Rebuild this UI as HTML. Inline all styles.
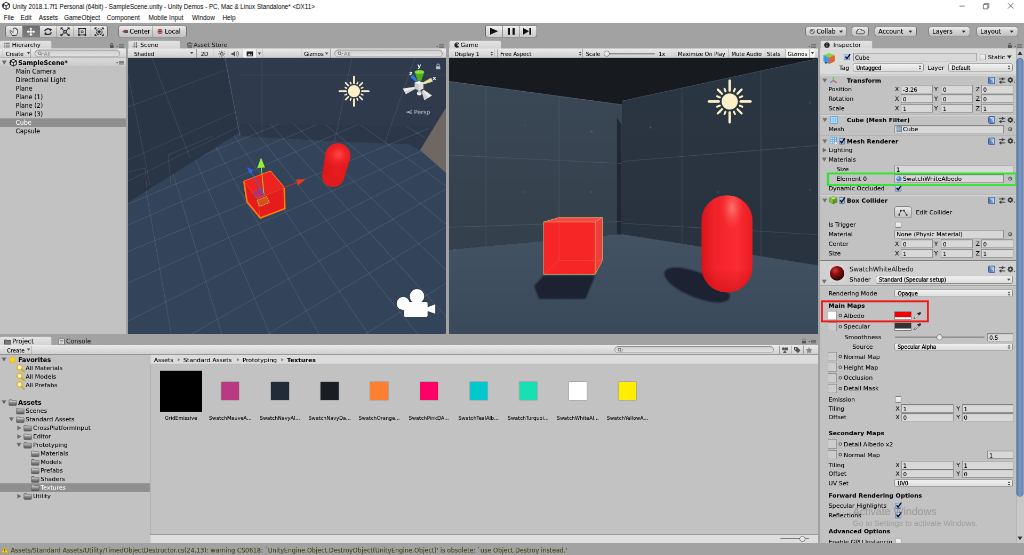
<!DOCTYPE html>
<html><head><meta charset="utf-8"><title>Unity</title><style>
html,body{margin:0;padding:0;background:#a2a2a2;overflow:hidden;width:1024px;height:555px}
#root{position:absolute;left:0;top:0;width:1920px;height:1041px;transform:scale(0.5333333);transform-origin:0 0;font:11.4px "DejaVu Sans","Liberation Sans",sans-serif;color:#000;overflow:hidden}
#root div,#root span,#root svg{position:absolute;box-sizing:border-box}
#root svg{overflow:visible}
.t{white-space:nowrap;transform:translateY(-50%);line-height:1.2}
.b{font-weight:bold}
#u .t{-webkit-text-stroke:0.13px currentColor}
#u .t.b{-webkit-text-stroke:0.06px currentColor}
.btn{border:1px solid #6b6b6b;border-radius:4px;background:linear-gradient(#ececec,#d2d2d2 50%,#c4c4c4)}
.tab{background:linear-gradient(#e4e4e4,#d3d3d3);border:1px solid #b4b4b4;border-bottom:none;border-radius:3px 3px 0 0}
.ptb{background:linear-gradient(#ebebeb,#cfcfcf);border-bottom:1px solid #8a8a8a}
.panel{background:#c2c2c2}
.fld{background:#d8d8d8;border:1px solid #8d8d8d;border-top-color:#7a7a7a;box-shadow:inset 0 1px 1px rgba(0,0,0,.12)}
.dd{background:linear-gradient(#f2f2f2,#dcdcdc);border:1px solid #8a8a8a;border-radius:3px}
.sep{background:#8e8e8e}
</style></head><body><div id="root">
<div style="left:0.00px;top:0.00px;width:1920.00px;height:43.00px;background:#fff"></div>
<svg style="left:2.500px;top:3px;width:16px;height:16px" viewBox="0 0 16 16"><path d="M8.500 1.200 L14.600 4.600 V11.400 L8.500 14.800 L2.400 11.400 V4.600 Z" fill="#fff" stroke="#1a1a1a" stroke-width="1.700" stroke-linejoin="round"/><path d="M8.500 8 V14.800 M8.500 8 L14.600 4.600 M8.500 8 L2.400 4.600" stroke="#1a1a1a" stroke-width="1.700" fill="none"/><path d="M0 8 L4.200 5.300 V10.700 Z" fill="#1a1a1a"/></svg>
<span class="t" style="left:23.60px;top:10.60px;font:11.65px 'Liberation Sans',sans-serif;color:#000;transform:translateY(-50%) scaleY(1.2)">Unity 2018.1.7f1 Personal (64bit) - SampleScene.unity - Unity Demos - PC, Mac &amp; Linux Standalone* &lt;DX11&gt;</span>
<svg style="left:1780px;top:0;width:140px;height:23px" viewBox="0 0 140 23"><path d="M19 11.5 H29" stroke="#222" stroke-width="1"/><path d="M64 8.5 H72 V16.5 H64 Z M66 8.5 V6.5 H74 V14.5 H72" stroke="#222" stroke-width="1" fill="none"/><path d="M110 6 L120 16 M120 6 L110 16" stroke="#222" stroke-width="1.1"/></svg>
<span class="t" style="left:7.00px;top:33.00px;font:12px 'Liberation Sans',sans-serif;color:#000;transform:translateY(-50%) scaleY(1.1)">File</span>
<span class="t" style="left:38.40px;top:33.00px;font:12px 'Liberation Sans',sans-serif;color:#000;transform:translateY(-50%) scaleY(1.1)">Edit</span>
<span class="t" style="left:72.70px;top:33.00px;font:12px 'Liberation Sans',sans-serif;color:#000;transform:translateY(-50%) scaleY(1.1)">Assets</span>
<span class="t" style="left:120.00px;top:33.00px;font:12px 'Liberation Sans',sans-serif;color:#000;transform:translateY(-50%) scaleY(1.1)">GameObject</span>
<span class="t" style="left:200.00px;top:33.00px;font:12px 'Liberation Sans',sans-serif;color:#000;transform:translateY(-50%) scaleY(1.1)">Component</span>
<span class="t" style="left:278.40px;top:33.00px;font:12px 'Liberation Sans',sans-serif;color:#000;transform:translateY(-50%) scaleY(1.1)">Mobile Input</span>
<span class="t" style="left:360.00px;top:33.00px;font:12px 'Liberation Sans',sans-serif;color:#000;transform:translateY(-50%) scaleY(1.1)">Window</span>
<span class="t" style="left:417.00px;top:33.00px;font:12px 'Liberation Sans',sans-serif;color:#000;transform:translateY(-50%) scaleY(1.1)">Help</span>
<div id="u" style="left:0;top:0;width:1920px;height:1041px;will-change:transform">
<div style="left:0.00px;top:43.00px;width:1920.00px;height:33.00px;background:#a2a2a2"></div>
<div class="btn" style="left:10.00px;top:48.00px;width:192.00px;height:22.00px;"></div>
<div style="left:42.00px;top:48.00px;width:1.00px;height:22.00px;background:#7a7a7a"></div>
<div style="left:42.00px;top:48.00px;width:32.00px;height:22.00px;background:linear-gradient(#6e6e6e,#7e7e7e);border-top:1px solid #555;border-bottom:1px solid #555"></div>
<div style="left:74.00px;top:48.00px;width:1.00px;height:22.00px;background:#7a7a7a"></div>
<div style="left:106.00px;top:48.00px;width:1.00px;height:22.00px;background:#7a7a7a"></div>
<div style="left:138.00px;top:48.00px;width:1.00px;height:22.00px;background:#7a7a7a"></div>
<div style="left:170.00px;top:48.00px;width:1.00px;height:22.00px;background:#7a7a7a"></div>
<svg style="left:16px;top:49.5px;width:20px;height:19px" viewBox="0 0 20 19"><g transform="translate(-3.2 -3.4) scale(1.32)"><path d="M6.5 9 C5 7.5 3.5 8.5 5 10.5 L8 15 H13.5 C15 13 15.5 10 15 7 C14.8 6 13.6 6 13.5 7 V5.5 C13.4 4.5 12.1 4.5 12 5.500 V4.8 C11.9 3.8 10.6 3.8 10.5 4.8 V5.6 C10.4 4.6 9.1 4.6 9 5.6 V11 Z" fill="#e4e4e4" stroke="#3a3a3a" stroke-width=".85"/></g></svg>
<svg style="left:48px;top:49.5px;width:20px;height:19px" viewBox="0 0 20 19"><path d="M10 1.5 L13 5 H11 V8.5 H14.5 V6.5 L18 9.5 L14.5 12.5 V10.5 H11 V14 H13 L10 17.5 L7 14 H9 V10.5 H5.5 V12.5 L2 9.5 L5.5 6.5 V8.5 H9 V5 H7 Z" fill="#fff"/></svg>
<svg style="left:80px;top:49.5px;width:20px;height:19px" viewBox="0 0 20 19"><path d="M4 8.5 A6 5 0 0 1 15 6.5 M16 10.5 A6 5 0 0 1 5 12.5" stroke="#222" stroke-width="2.2" fill="none"/><path d="M13 3 L17.5 5 L14 9 Z M7 16 L2.5 14 L6 10 Z" fill="#222"/></svg>
<svg style="left:112px;top:49.5px;width:20px;height:19px" viewBox="0 0 20 19"><rect x="7.700" y="7.200" width="4.600" height="4.600" fill="#ddd" stroke="#222" stroke-width="1.900"/><path d="M2 2 L6.5 6 M18 2 L13.5 6 M2 17 L6.5 13 M18 17 L13.5 13" stroke="#222" stroke-width="1.8"/><path d="M1.5 1.5 H6 L1.5 6 Z M18.5 1.5 H14 L18.500 6 Z M1.5 17.5 H6 L1.5 13 Z M18.5 17.5 H14 L18.5 13 Z" fill="#222"/></svg>
<svg style="left:144px;top:49.5px;width:20px;height:19px" viewBox="0 0 20 19"><rect x="4" y="3.5" width="12" height="12" fill="none" stroke="#222" stroke-width="1.6"/><circle cx="10" cy="9.5" r="2" fill="none" stroke="#222" stroke-width="1.2"/><path d="M2.5 2 h3 v3 h-3z M14.5 2 h3 v3 h-3z M2.5 14 h3 v3 h-3z M14.5 14 h3 v3 h-3z" fill="#222"/></svg>
<svg style="left:176px;top:49.5px;width:20px;height:19px" viewBox="0 0 20 19"><path d="M3 3 L17 16 M17 3 L3 16" stroke="#222" stroke-width="1.2" stroke-dasharray="2 1.5"/><circle cx="10" cy="9.5" r="5.5" fill="none" stroke="#222" stroke-width="1.4" stroke-dasharray="3 1.5"/><path d="M10 6 V13 M6.500 9.5 H13.5" stroke="#222" stroke-width="1.4"/><path d="M1.5 1.5 H6 L1.5 6 Z M18.5 1.5 H14 L18.500 6 Z M1.5 17.5 H6 L1.5 13 Z M18.5 17.5 H14 L18.5 13 Z" fill="#222"/></svg>
<div class="btn" style="left:222.00px;top:48.00px;width:128.00px;height:22.00px;"></div>
<div style="left:286.00px;top:48.00px;width:1.00px;height:22.00px;background:#7a7a7a"></div>
<svg style="left:229px;top:54px;width:12px;height:10px" viewBox="0 0 12 10"><path d="M0 5 L6 1 V9 Z" fill="#b33"/><path d="M6 2 H11 V8 H6" fill="#555"/></svg>
<span class="t" style="left:243.00px;top:60.00px;font-size:11.5px">Center</span>
<svg style="left:294px;top:53px;width:12px;height:12px" viewBox="0 0 12 12"><circle cx="6" cy="6" r="5" fill="#a44"/><path d="M1 6 H11 M6 1 V11" stroke="#633" stroke-width="1"/><ellipse cx="6" cy="6" rx="5" ry="2.3" fill="none" stroke="#ddd" stroke-width=".8"/></svg>
<span class="t" style="left:309.00px;top:60.00px;font-size:11.5px">Local</span>
<div class="btn" style="left:910.00px;top:47.00px;width:97.00px;height:23.00px;border-color:#5a5a5a;background:linear-gradient(#f6f6f6,#dcdcdc 50%,#cccccc)"></div>
<div style="left:942.00px;top:47.00px;width:1.00px;height:23.00px;background:#7a7a7a"></div>
<div style="left:974.00px;top:47.00px;width:1.00px;height:23.00px;background:#7a7a7a"></div>
<svg style="left:910px;top:47px;width:96px;height:23px" viewBox="0 0 96 23"><path d="M9 5 L24 11.5 L9 18 Z" fill="#111"/><path d="M42 5.500 h4 v12.5 h-4z M51 5.5 h4 v12.5 h-4z" fill="#111"/><path d="M71 5.5 L82 11.5 L71 18 Z M82.500 5.5 h3.5 v12.5 h-3.5z" fill="#111"/></svg>
<div class="btn" style="left:1510.00px;top:50.00px;width:78.00px;height:18.00px;"></div>
<svg style="left:1517px;top:53px;width:12px;height:12px" viewBox="0 0 12 12"><circle cx="6" cy="6" r="5" fill="#777"/><path d="M3 6 L5.300 8.5 L9.300 3.500" stroke="#e8e8e8" stroke-width="1.6" fill="none"/></svg>
<span class="t" style="left:1531.00px;top:60.00px;font-size:11.5px">Collab</span>
<svg style="left:1573px;top:57px;width:8px;height:5px" viewBox="0 0 8 5"><path d="M0.500 0.5 H7.5 L4 4.500 Z" fill="#222"/></svg>
<div class="btn" style="left:1597.00px;top:50.00px;width:32.00px;height:18.00px;"></div>
<svg style="left:1603px;top:53px;width:20px;height:12px" viewBox="0 0 20 12"><path d="M4.500 10.500 A3 3 0 0 1 4.500 4.800 A4.500 4.500 0 0 1 13 4 A3.300 3.300 0 0 1 15.500 10.500 Z" fill="none" stroke="#333" stroke-width="1.3"/></svg>
<div class="btn" style="left:1640.00px;top:50.00px;width:79.00px;height:18.00px;"></div>
<span class="t" style="left:1647.00px;top:60.00px;font-size:11.5px">Account</span>
<svg style="left:1703px;top:57px;width:8px;height:5px" viewBox="0 0 8 5"><path d="M0.500 0.5 H7.5 L4 4.500 Z" fill="#222"/></svg>
<div class="btn" style="left:1741.00px;top:50.00px;width:78.00px;height:18.00px;"></div>
<span class="t" style="left:1748.00px;top:60.00px;font-size:11.5px">Layers</span>
<svg style="left:1803px;top:57px;width:8px;height:5px" viewBox="0 0 8 5"><path d="M0.500 0.5 H7.5 L4 4.500 Z" fill="#222"/></svg>
<div class="btn" style="left:1831.00px;top:50.00px;width:78.00px;height:18.00px;"></div>
<span class="t" style="left:1838.00px;top:60.00px;font-size:11.5px">Layout</span>
<svg style="left:1893px;top:57px;width:8px;height:5px" viewBox="0 0 8 5"><path d="M0.500 0.5 H7.5 L4 4.500 Z" fill="#222"/></svg>
<div class="panel" style="left:0.00px;top:91.00px;width:236.00px;height:535.00px;"></div>
<div class="tab" style="left:-1.00px;top:76.00px;width:98.00px;height:16.00px;"></div>
<svg style="left:7px;top:80px;width:11px;height:9px" viewBox="0 0 11 9"><path d="M0 1 h2 M3.500 1 h7.500 M0 4.500 h2 M3.500 4.500 h7.500 M0 8 h2 M3.500 8 h7.500" stroke="#555" stroke-width="1.3"/></svg>
<span class="t" style="left:22.50px;top:84.90px;font-size:11.1px">Hierarchy</span>
<svg style="left:205px;top:80px;width:9px;height:11px" viewBox="0 0 9 11"><path d="M1 5 h7 v5 h-7z" fill="#555"/><path d="M2.500 5 V3.300 a2 2 0 0 1 4 0 V5" fill="none" stroke="#555" stroke-width="1.2"/></svg>
<svg style="left:218px;top:83px;width:14px;height:8px" viewBox="0 0 14 8"><path d="M0 3 h3.500 l-1.750 2.200z" fill="#444"/><path d="M5 1 h9 M5 3.500 h9 M5 6 h9" stroke="#666" stroke-width="1.5"/></svg>
<div class="ptb" style="left:0.00px;top:91.00px;width:236.00px;height:18.00px;"></div>
<div style="left:5.00px;top:92.00px;width:1.00px;height:16.00px;background:#9a9a9a"></div>
<span class="t" style="left:11.00px;top:101.50px;font-size:10px">Create</span>
<svg style="left:50px;top:97px;width:7px;height:5px" viewBox="0 0 7 5"><path d="M0.500 0.5 h6 l-3 4z" fill="#444"/></svg>
<div style="left:57.00px;top:92.00px;width:1.00px;height:16.00px;background:#9a9a9a"></div>
<div style="left:64.50px;top:93.00px;width:160.00px;height:14.00px;background:linear-gradient(#d0d0d0,#e2e2e2);border:1px solid #8a8a8a;border-radius:8px;box-shadow:inset 0 1px 1px rgba(0,0,0,.2)"></div>
<svg style="left:70.5px;top:96px;width:12px;height:9px" viewBox="0 0 12 9"><circle cx="3.500" cy="3.700" r="2.600" fill="none" stroke="#6a6a6a" stroke-width="1.1"/><path d="M5.300 5.700 L7.500 8.200" stroke="#6a6a6a" stroke-width="1.2"/><path d="M8 3.500 h3 l-1.500 2z" fill="#6a6a6a"/></svg>
<span class="t" style="left:82.00px;top:100.50px;color:#8c8c8c;font-size:10.5px">All</span>
<div style="left:0.00px;top:109.00px;width:236.00px;height:17.00px;background:linear-gradient(#d9d9d9,#cacaca);border-bottom:1px solid #9c9c9c"></div>
<svg style="left:3px;top:113px;width:10px;height:9px" viewBox="0 0 10 9"><path d="M0.500 0.500 h9 l-4.500 8z" fill="#6a6a6a"/></svg>
<svg style="left:16.500px;top:110px;width:15px;height:15px" viewBox="0 0 16 16"><path d="M8.500 1.200 L14.600 4.600 V11.400 L8.500 14.800 L2.400 11.400 V4.600 Z" fill="#e2e2e2" stroke="#1a1a1a" stroke-width="1.700" stroke-linejoin="round"/><path d="M8.500 8 V14.800 M8.500 8 L14.600 4.600 M8.500 8 L2.400 4.600" stroke="#1a1a1a" stroke-width="1.700" fill="none"/><path d="M0 8 L4.200 5.300 V10.700 Z" fill="#1a1a1a"/></svg>
<span class="t b" style="left:34.00px;top:118.50px;font-size:11.5px">SampleScene*</span>
<svg style="left:218px;top:114px;width:14px;height:8px" viewBox="0 0 14 8"><path d="M0 3 h3.500 l-1.750 2.200z" fill="#444"/><path d="M5 1 h9 M5 3.500 h9 M5 6 h9" stroke="#666" stroke-width="1.5"/></svg>
<span class="t" style="left:29.50px;top:135.40px;">Main Camera</span>
<span class="t" style="left:29.50px;top:151.40px;">Directional Light</span>
<span class="t" style="left:29.50px;top:167.40px;">Plane</span>
<span class="t" style="left:29.50px;top:183.40px;">Plane (1)</span>
<span class="t" style="left:29.50px;top:199.40px;">Plane (2)</span>
<span class="t" style="left:29.50px;top:215.40px;">Plane (3)</span>
<div style="left:0.00px;top:222.00px;width:236.00px;height:16.00px;background:#8f8f8f"></div>
<span class="t" style="left:29.50px;top:231.40px;color:#fff">Cube</span>
<span class="t" style="left:29.50px;top:247.40px;">Capsule</span>
<div class="panel" style="left:240.00px;top:91.00px;width:596.00px;height:535.00px;"></div>
<div class="tab" style="left:240.00px;top:76.00px;width:98.00px;height:16.00px;"></div>
<svg style="left:248px;top:79px;width:11px;height:11px" viewBox="0 0 11 11"><path d="M3.500 0 V11 M7.500 0 V11 M0 3.500 H11 M0 7.500 H11" stroke="#444" stroke-width="1.2"/></svg>
<span class="t" style="left:263.00px;top:84.90px;font-size:11.1px">Scene</span>
<svg style="left:350px;top:79px;width:11px;height:11px" viewBox="0 0 11 11"><path d="M1.500 3 h8.500 l-1 7.500 h-6.500z" fill="none" stroke="#555" stroke-width="1.3"/><path d="M3.500 3 a2 2.500 0 0 1 4 0" fill="none" stroke="#555" stroke-width="1.2"/><path d="M3 5 h5 v3.500 h-5z" fill="#666"/></svg>
<span class="t" style="left:363.00px;top:84.90px;font-size:11.1px;color:#222">Asset Store</span>
<svg style="left:818px;top:83px;width:14px;height:8px" viewBox="0 0 14 8"><path d="M0 3 h3.500 l-1.750 2.200z" fill="#444"/><path d="M5 1 h9 M5 3.500 h9 M5 6 h9" stroke="#666" stroke-width="1.5"/></svg>
<div class="ptb" style="left:240.00px;top:91.00px;width:596.00px;height:18.00px;"></div>
<span class="t" style="left:251.50px;top:101.50px;font-size:10px">Shaded</span>
<svg style="left:356px;top:97px;width:7px;height:5px" viewBox="0 0 7 5"><path d="M0.500 0.5 h6 l-3 4z" fill="#444"/></svg>
<div style="left:368.00px;top:92.00px;width:1.00px;height:16.00px;background:#9a9a9a"></div>
<div style="left:399.00px;top:92.00px;width:1.00px;height:16.00px;background:#9a9a9a"></div>
<div style="left:427.00px;top:92.00px;width:1.00px;height:16.00px;background:#9a9a9a"></div>
<div style="left:455.00px;top:92.00px;width:1.00px;height:16.00px;background:#9a9a9a"></div>
<div style="left:480.50px;top:92.00px;width:1.00px;height:16.00px;background:#9a9a9a"></div>
<div style="left:491.00px;top:92.00px;width:1.00px;height:16.00px;background:#9a9a9a"></div>
<span class="t" style="left:376.50px;top:101.50px;font-size:10px">2D</span>
<svg style="left:408.5px;top:93.5px;width:14px;height:14px" viewBox="0 0 14 14"><circle cx="7" cy="7" r="2.400" fill="none" stroke="#333" stroke-width="1.100"/><path d="M7 0.500 V3 M7 11 V13.500 M0.500 7 H3 M11 7 H13.500 M2.400 2.400 L4.200 4.200 M9.800 9.800 L11.600 11.600 M2.400 11.600 L4.200 9.800 M9.800 4.200 L11.600 2.400" stroke="#333" stroke-width="1"/></svg>
<svg style="left:433px;top:93.5px;width:16px;height:14px" viewBox="0 0 16 14"><path d="M1 5 h3 l4 -3.500 v11 l-4 -3.500 h-3z" fill="#555"/><path d="M10 4 a4 4 0 0 1 0 6 M12 2 a6.500 6.500 0 0 1 0 10" fill="none" stroke="#666" stroke-width="1.2"/></svg>
<div style="left:455.50px;top:91.00px;width:25.00px;height:17.00px;background:#f4f4f4"></div>
<svg style="left:461.5px;top:95.5px;width:13px;height:10px" viewBox="0 0 13 10"><rect x="0.500" y="0.500" width="12" height="9" fill="#222"/><path d="M2 8 l3 -4 l2.500 3 l1.500 -1.500 l2 2.500z" fill="#eee"/></svg>
<svg style="left:483px;top:97.5px;width:7px;height:5px" viewBox="0 0 7 5"><path d="M0.500 0.5 h6 l-3 4z" fill="#444"/></svg>
<div style="left:564.00px;top:92.00px;width:1.00px;height:16.00px;background:#9a9a9a"></div>
<span class="t" style="left:570.00px;top:101.50px;font-size:10px">Gizmos</span>
<svg style="left:608.5px;top:97.5px;width:7px;height:5px" viewBox="0 0 7 5"><path d="M0.500 0.5 h6 l-3 4z" fill="#444"/></svg>
<div style="left:618.50px;top:92.00px;width:1.00px;height:16.00px;background:#9a9a9a"></div>
<div style="left:627.00px;top:93.00px;width:203.00px;height:14.00px;background:linear-gradient(#d0d0d0,#e2e2e2);border:1px solid #8a8a8a;border-radius:8px;box-shadow:inset 0 1px 1px rgba(0,0,0,.2)"></div>
<svg style="left:633px;top:96px;width:12px;height:9px" viewBox="0 0 12 9"><circle cx="3.500" cy="3.700" r="2.600" fill="none" stroke="#6a6a6a" stroke-width="1.1"/><path d="M5.300 5.700 L7.500 8.200" stroke="#6a6a6a" stroke-width="1.2"/><path d="M8 3.500 h3 l-1.500 2z" fill="#6a6a6a"/></svg>
<span class="t" style="left:644.50px;top:100.50px;color:#8c8c8c;font-size:10.5px">All</span>
<svg style="left:240px;top:109px;width:596px;height:517px;overflow:hidden" viewBox="128 58.133 317.867 275.734" preserveAspectRatio="none"><defs><clipPath id="floorclip"><polygon points="128,202.300 240.400,131.800 240,124 430,126 420,150.100 448,174.700 448,334 128,334"/></clipPath><linearGradient id="capg" x1="0" y1="0" x2="1" y2="0"><stop offset="0" stop-color="#da161a"/><stop offset=".5" stop-color="#e81c20"/><stop offset="1" stop-color="#e01a1e"/></linearGradient><radialGradient id="capr" cx=".53" cy=".45" r=".55"><stop offset="0" stop-color="#ff4a4a"/><stop offset=".5" stop-color="#f22428"/><stop offset="1" stop-color="#e21a1e"/></radialGradient></defs><rect x="128" y="58.133" width="317.867" height="275.734" fill="#33445a"/><polygon points="225,58 448,58 448,110 420,150.100 409,144.200 340,141.500 241,136 240.400,131.800" fill="#2f3b4d"/><polygon points="240,124.500 432,126.500 420,150.100 409,144.200 340,141.500 241,136" fill="#2c384a"/><polygon points="128,58 225,58 240.400,131.800 128,202.300" fill="#293545"/><polygon points="448,104.600 420,150.100 448,174.700" fill="#6e6762"/><path d="M225 58 L240 136" stroke="#55606e" stroke-width=".7"/><path d="M128 107 L225 70" stroke="#8090a0" stroke-opacity=".28" stroke-width=".6"/><path d="M128 160 L235 112" stroke="#8090a0" stroke-opacity=".28" stroke-width=".6"/><path d="M128 181 L240 126" stroke="#8090a0" stroke-opacity=".28" stroke-width=".6"/><path d="M152 58 L190 158" stroke="#8090a0" stroke-opacity=".28" stroke-width=".6"/><path d="M128 75 L150 185" stroke="#8090a0" stroke-opacity=".28" stroke-width=".6"/><path d="M240 75 L448 75" stroke="#8090a0" stroke-opacity=".28" stroke-width=".6"/><path d="M352 58 L334.5 142" stroke="#8090a0" stroke-opacity=".28" stroke-width=".6"/><path d="M415 58 L385 142" stroke="#8090a0" stroke-opacity=".28" stroke-width=".6"/><path d="M262 58 L262 137" stroke="#8090a0" stroke-opacity=".28" stroke-width=".6"/><path d="M168 155 L213 136" stroke="#8090a0" stroke-opacity=".28" stroke-width=".6"/><path d="M168 155 L171 185" stroke="#8090a0" stroke-opacity=".28" stroke-width=".6"/><path d="M128 172 L145 168" stroke="#8090a0" stroke-opacity=".28" stroke-width=".6"/><path d="M145 168 L147 190" stroke="#8090a0" stroke-opacity=".28" stroke-width=".6"/><g clip-path="url(#floorclip)" stroke="#a8b0b4" stroke-opacity=".23" stroke-width=".6"><path d="M102 -60 L122.3 340"/><path d="M102 -60 L172.3 340"/><path d="M102 -60 L223.6 340"/><path d="M102 -60 L272.3 340"/><path d="M102 -60 L322.3 340"/><path d="M102 -60 L372.3 340"/><path d="M102 -60 L422.3 340"/><path d="M102 -60 L467.6 340"/><path d="M102 -60 L519.2 340"/><path d="M102 -60 L585.9 340"/><path d="M102 -60 L661.4 340"/><path d="M102 -60 L755.1 340"/><path d="M102 -60 L880.1 340"/><path d="M100 215.8 L460 64.6"/><path d="M100 237.2 L460 79.9"/><path d="M100 263.0 L460 115.7"/><path d="M100 295.6 L460 133.6"/><path d="M100 335.2 L460 153.0"/><path d="M100 386.2 L460 181.0"/><path d="M100 434.8 L460 218.8"/><path d="M100 501.2 L460 274.4"/><path d="M100 561.2 L460 323.6"/><path d="M100 197.5 L460 49.9"/></g><circle cx="354" cy="91.2" r="6" fill="#fdf0c8"/><path d="M362.00 91.20 L368.60 91.20" stroke="#fdf0c8" stroke-width="1.84" stroke-linecap="round"/><path d="M361.39 94.26 L362.87 94.87" stroke="#fdf0c8" stroke-width="1.44" stroke-linecap="round"/><path d="M359.66 96.86 L362.34 99.54" stroke="#fdf0c8" stroke-width="1.60" stroke-linecap="round"/><path d="M357.06 98.59 L357.67 100.07" stroke="#fdf0c8" stroke-width="1.44" stroke-linecap="round"/><path d="M354.00 99.20 L354.00 105.80" stroke="#fdf0c8" stroke-width="1.84" stroke-linecap="round"/><path d="M350.94 98.59 L350.33 100.07" stroke="#fdf0c8" stroke-width="1.44" stroke-linecap="round"/><path d="M348.34 96.86 L345.66 99.54" stroke="#fdf0c8" stroke-width="1.60" stroke-linecap="round"/><path d="M346.61 94.26 L345.13 94.87" stroke="#fdf0c8" stroke-width="1.44" stroke-linecap="round"/><path d="M346.00 91.20 L339.40 91.20" stroke="#fdf0c8" stroke-width="1.84" stroke-linecap="round"/><path d="M346.61 88.14 L345.13 87.53" stroke="#fdf0c8" stroke-width="1.44" stroke-linecap="round"/><path d="M348.34 85.54 L345.66 82.86" stroke="#fdf0c8" stroke-width="1.60" stroke-linecap="round"/><path d="M350.94 83.81 L350.33 82.33" stroke="#fdf0c8" stroke-width="1.44" stroke-linecap="round"/><path d="M354.00 83.20 L354.00 76.60" stroke="#fdf0c8" stroke-width="1.84" stroke-linecap="round"/><path d="M357.06 83.81 L357.67 82.33" stroke="#fdf0c8" stroke-width="1.44" stroke-linecap="round"/><path d="M359.66 85.54 L362.34 82.86" stroke="#fdf0c8" stroke-width="1.60" stroke-linecap="round"/><path d="M361.39 88.14 L362.87 87.53" stroke="#fdf0c8" stroke-width="1.44" stroke-linecap="round"/><g><circle cx="333.2" cy="176" r="11.1" fill="#e11a1e"/><polygon points="350.18,158.73 344.02,178.48 322.38,173.52 325.42,153.07" fill="url(#capg)"/><circle cx="337.8" cy="155.9" r="12.7" fill="url(#capr)"/></g><polygon points="270.400,171.400 243.900,181.500 247,201.700 260.300,218 284.900,208.600 284.200,187.800" fill="#e61c1c" stroke="#ff7a10" stroke-width="1.600" stroke-linejoin="round"/><polygon points="270.400,171.400 243.900,181.500 257.500,198.500 284.200,187.800" fill="#ef2222"/><path d="M243.900 181.500 L257.500 198.500 L284.200 187.800 M257.500 198.500 L260.300 218" stroke="#e8843a" stroke-opacity=".6" stroke-width=".5" fill="none"/><path d="M264 195 L296 183" stroke="#d03020" stroke-width=".8"/><polygon points="296,179.500 305.500,179.300 298,185.500" fill="#e83a1c"/><path d="M264 195 L261.200 166" stroke="#90e040" stroke-width=".8"/><polygon points="257.300,168 261,157.500 265,167.600" fill="#90f038"/><path d="M264 195 L250.500 171" stroke="#3a6ae0" stroke-width=".8"/><polygon points="247,167 253.500,170 249.500,174" fill="#2a62e6"/><polygon points="253.500,191.500 262,188.500 264,195 255.500,198" fill="#8040a0" fill-opacity=".55" stroke="#7060d0" stroke-width=".4"/><polygon points="257,200.500 266.500,196.500 269.500,202.500 260,206.500" fill="#c08020" fill-opacity=".55" stroke="#c8d040" stroke-width=".5"/><g><polygon points="410.200,76.800 413.300,74.900 417.700,80.800 415.900,82" fill="#2a7ae8"/><polygon points="414.600,72 424.300,72 421.300,80.800 417.700,80.800" fill="#4fae1a"/><ellipse cx="419.450" cy="72" rx="4.850" ry="1.900" fill="#86e038"/><polygon points="423,82.200 423.800,84.400 432.900,81.600 431.200,77.700" fill="#e6df98"/><polygon points="403,88.500 405.800,94.200 415.200,89 414.600,86.900" fill="#d4d4d4"/><polygon points="403,88.500 404.400,91.400 415,88 414.600,86.900" fill="#ececec"/><polygon points="424.300,100.400 431.900,95.500 423.800,89.800 421.500,91.300" fill="#cfcfcf"/><polygon points="428.100,98 431.900,95.500 423.800,89.800 422.600,90.500" fill="#e8e8e8"/><ellipse cx="419.300" cy="93.400" rx="2.300" ry="1.900" fill="#f0f0f0"/><rect x="418" y="89.500" width="2.600" height="3.500" fill="#c4c4c4"/><polygon points="414.600,82.600 419,81 423.400,82.600 423.400,88.800 419,90.400 414.600,88.800" fill="#cacaca"/><polygon points="414.600,82.600 419,81 423.400,82.600 419,84.200" fill="#f2f2f2"/><polygon points="419,84.200 423.400,82.600 423.400,88.800 419,90.400" fill="#dedede"/><text x="417.300" y="67.800" font-size="5.800" font-weight="bold" fill="#fff" font-family="DejaVu Sans,sans-serif">y</text><text x="432.600" y="80.200" font-size="5.800" font-weight="bold" fill="#fff" font-family="DejaVu Sans,sans-serif">x</text><text x="409.200" y="75.200" font-size="5.800" font-weight="bold" fill="#fff" font-family="DejaVu Sans,sans-serif">z</text></g><path d="M411.800 110.500 L406.800 112.100 L411.800 113.700 M406.800 112.100 H411.800" stroke="#b8bec6" stroke-width=".6" fill="none"/><text x="414" y="114.100" font-size="5.900" fill="#c4c9d0" font-family="DejaVu Sans,sans-serif">Persp</text><rect x="436" y="66.300" width="4.200" height="3" fill="#b8bcc6"/><path d="M436.900 66.300 v-1.100 a1.200 1.200 0 0 1 2.400 0 v1.100" stroke="#b8bcc6" stroke-width=".7" fill="none"/><g fill="#1c2838" stroke="#1c2838" stroke-width="1.400" stroke-linejoin="round" opacity=".55"><circle cx="403.200" cy="303.500" r="6.500"/><circle cx="417" cy="296.300" r="7.200"/><rect x="404" y="301.900" width="23.600" height="15" rx="1.600"/><polygon points="427,307.400 435.300,304.300 435.300,313.700 427,311"/></g><g fill="#fdfdfd"><circle cx="403.200" cy="303.500" r="6.500"/><circle cx="417" cy="296.300" r="7.200"/><rect x="404" y="301.900" width="23.600" height="15" rx="1.600"/><polygon points="427,307.400 435.300,304.300 435.300,313.700 427,311"/></g></svg>
<div class="panel" style="left:842.00px;top:91.00px;width:692.00px;height:535.00px;"></div>
<div class="tab" style="left:842.00px;top:76.00px;width:98.00px;height:16.00px;"></div>
<svg style="left:851px;top:79px;width:11px;height:11px" viewBox="0 0 11 11"><path d="M10 2.500 A5 5 0 1 0 10 8.500 L5.500 5.500 Z" fill="#222"/><circle cx="6" cy="3" r="1" fill="#ddd"/></svg>
<span class="t" style="left:863.50px;top:84.90px;font-size:11.1px">Game</span>
<svg style="left:1516px;top:83px;width:14px;height:8px" viewBox="0 0 14 8"><path d="M0 3 h3.500 l-1.750 2.200z" fill="#444"/><path d="M5 1 h9 M5 3.500 h9 M5 6 h9" stroke="#666" stroke-width="1.5"/></svg>
<div class="ptb" style="left:842.00px;top:91.00px;width:692.00px;height:18.00px;"></div>
<span class="t" style="left:852.50px;top:101.50px;font-size:10px">Display 1</span>
<span class="t" style="left:938.00px;top:101.50px;font-size:10px">Free Aspect</span>
<span class="t" style="left:1098.50px;top:101.50px;font-size:10px">Scale</span>
<span class="t" style="left:1235.00px;top:101.50px;font-size:10px">1x</span>
<span class="t" style="left:1271.00px;top:101.50px;font-size:10px">Maximize On Play</span>
<span class="t" style="left:1371.40px;top:101.50px;font-size:10px">Mute Audio</span>
<span class="t" style="left:1438.00px;top:101.50px;font-size:10px">Stats</span>
<div style="left:1472.00px;top:91.00px;width:56.00px;height:17.00px;background:#f4f4f4"></div>
<span class="t" style="left:1476.80px;top:101.50px;font-size:10px">Gizmos</span>
<div style="left:847.00px;top:92.00px;width:1.00px;height:16.00px;background:#9a9a9a"></div>
<div style="left:926.00px;top:92.00px;width:1.00px;height:16.00px;background:#9a9a9a"></div>
<div style="left:932.00px;top:92.00px;width:1.00px;height:16.00px;background:#9a9a9a"></div>
<div style="left:1092.00px;top:92.00px;width:1.00px;height:16.00px;background:#9a9a9a"></div>
<div style="left:1266.60px;top:92.00px;width:1.00px;height:16.00px;background:#9a9a9a"></div>
<div style="left:1366.00px;top:92.00px;width:1.00px;height:16.00px;background:#9a9a9a"></div>
<div style="left:1433.60px;top:92.00px;width:1.00px;height:16.00px;background:#9a9a9a"></div>
<div style="left:1471.50px;top:92.00px;width:1.00px;height:16.00px;background:#9a9a9a"></div>
<div style="left:1516.50px;top:92.00px;width:1.00px;height:16.00px;background:#9a9a9a"></div>
<svg style="left:1519.5px;top:97px;width:7px;height:5px" viewBox="0 0 7 5"><path d="M0.500 0.5 h6 l-3 4z" fill="#444"/></svg>
<svg style="left:919px;top:96px;width:6px;height:9px" viewBox="0 0 6 9"><path d="M0.500 3.500 L3 0.500 L5.500 3.500z M0.500 5.500 L3 8.500 L5.500 5.500z" fill="#444"/></svg>
<svg style="left:1084.5px;top:96px;width:6px;height:9px" viewBox="0 0 6 9"><path d="M0.500 3.500 L3 0.500 L5.500 3.500z M0.500 5.500 L3 8.500 L5.500 5.500z" fill="#444"/></svg>
<div style="left:1137.00px;top:99.50px;width:91.00px;height:2.00px;background:#7e7e7e;border-radius:1px"></div>
<div style="left:1132.00px;top:95.00px;width:10.50px;height:10.50px;background:#e8e8e8;border:1px solid #555;border-radius:5.5px"></div>
<svg style="left:842px;top:109px;width:692px;height:517px;overflow:hidden" viewBox="449.067 58.133 369.067 275.734" preserveAspectRatio="none"><defs><linearGradient id="lw" x1="0" y1="0" x2="0" y2="1"><stop offset="0" stop-color="#3b4855"/><stop offset="1" stop-color="#34404c"/></linearGradient><linearGradient id="rw" x1="0" y1="0" x2="0" y2="1"><stop offset="0" stop-color="#2b3643"/><stop offset="1" stop-color="#29333f"/></linearGradient><linearGradient id="fl" x1="0" y1="0" x2="0" y2="1"><stop offset="0" stop-color="#435364"/><stop offset="1" stop-color="#3b4a5b"/></linearGradient><linearGradient id="gcap" x1="0" y1="0" x2="1" y2="0"><stop offset="0" stop-color="#d8141a"/><stop offset=".25" stop-color="#f0242a"/><stop offset=".7" stop-color="#fb2c32"/><stop offset="1" stop-color="#e81c22"/></linearGradient><radialGradient id="gcaph" cx=".6" cy=".13" r=".22"><stop offset="0" stop-color="#ff8a80" stop-opacity=".8"/><stop offset="1" stop-color="#ff5050" stop-opacity="0"/></radialGradient><linearGradient id="gcapb" x1="0" y1="0" x2="0" y2="1"><stop offset=".75" stop-color="#a00" stop-opacity="0"/><stop offset="1" stop-color="#a00" stop-opacity=".35"/></linearGradient><filter id="blur1" x="-20%" y="-20%" width="140%" height="140%"><feGaussianBlur stdDeviation="0.8"/></filter></defs><rect x="449.067" y="58.133" width="369.067" height="275.734" fill="#171a1f"/><polygon points="449,249.500 622,234 819,265.400 819,334 449,334" fill="url(#fl)"/><polygon points="449,81.300 622,104.700 622,234 449,249.500" fill="url(#lw)"/><polygon points="622,101 819,58.300 819,265.400 622,234" fill="url(#rw)"/><polygon points="617,117.500 621.500,125 621.500,234.800 617,233.800" fill="#1d2532" fill-opacity=".9"/><path d="M486 86.3 L486 246.2" stroke="#6a7886" stroke-opacity=".4" stroke-width=".6"/><path d="M559 96.2 L559 239.6" stroke="#6a7886" stroke-opacity=".4" stroke-width=".6"/><path d="M449 155 L622 163.5" stroke="#6a7886" stroke-opacity=".4" stroke-width=".6"/><path d="M449 227.3 L622 221.5" stroke="#6a7886" stroke-opacity=".4" stroke-width=".6"/><path d="M682 88 L682 243.6" stroke="#6a7886" stroke-opacity=".4" stroke-width=".6"/><path d="M761 70.9 L761 256.2" stroke="#6a7886" stroke-opacity=".4" stroke-width=".6"/><path d="M622.7 161.3 L819 145.3" stroke="#6a7886" stroke-opacity=".4" stroke-width=".6"/><path d="M622.7 223.3 L819 234.7" stroke="#6a7886" stroke-opacity=".4" stroke-width=".6"/><path d="M449 81.300 L622 104.700" stroke="#5a6a7a" stroke-width=".5"/><path d="M622 101 L819 58.300" stroke="#4a5a6a" stroke-width=".5"/><path d="M523.5 125 H526.5 M525 123.5 V126.5" stroke="#6a7886" stroke-opacity=".5" stroke-width=".5"/><path d="M590.0 131.5 H593.0 M591.5 130.0 V133.0" stroke="#6a7886" stroke-opacity=".5" stroke-width=".5"/><path d="M523.5 192 H526.5 M525 190.5 V193.5" stroke="#6a7886" stroke-opacity=".5" stroke-width=".5"/><path d="M590.0 192 H593.0 M591.5 190.5 V193.5" stroke="#6a7886" stroke-opacity=".5" stroke-width=".5"/><path d="M649.0 127.5 H652.0 M650.5 126.0 V129.0" stroke="#6a7886" stroke-opacity=".5" stroke-width=".5"/><path d="M808.5 103 H811.5 M810 101.5 V104.5" stroke="#6a7886" stroke-opacity=".5" stroke-width=".5"/><path d="M716.5 192 H719.5 M718 190.5 V193.5" stroke="#6a7886" stroke-opacity=".5" stroke-width=".5"/><path d="M808.5 190 H811.5 M810 188.5 V191.5" stroke="#6a7886" stroke-opacity=".5" stroke-width=".5"/><path d="M453.5 250 H456.5 M455 248.5 V251.5" stroke="#6a7886" stroke-opacity=".5" stroke-width=".5"/><circle cx="729.7" cy="101.5" r="8.1" fill="#fdf0c8"/><path d="M740.70 101.50 L750.50 101.50" stroke="#fdf0c8" stroke-width="2.53" stroke-linecap="round"/><path d="M739.86 105.71 L742.26 106.70" stroke="#fdf0c8" stroke-width="1.98" stroke-linecap="round"/><path d="M737.48 109.28 L741.58 113.38" stroke="#fdf0c8" stroke-width="2.20" stroke-linecap="round"/><path d="M733.91 111.66 L734.90 114.06" stroke="#fdf0c8" stroke-width="1.98" stroke-linecap="round"/><path d="M729.70 112.50 L729.70 122.30" stroke="#fdf0c8" stroke-width="2.53" stroke-linecap="round"/><path d="M725.49 111.66 L724.50 114.06" stroke="#fdf0c8" stroke-width="1.98" stroke-linecap="round"/><path d="M721.92 109.28 L717.82 113.38" stroke="#fdf0c8" stroke-width="2.20" stroke-linecap="round"/><path d="M719.54 105.71 L717.14 106.70" stroke="#fdf0c8" stroke-width="1.98" stroke-linecap="round"/><path d="M718.70 101.50 L708.90 101.50" stroke="#fdf0c8" stroke-width="2.53" stroke-linecap="round"/><path d="M719.54 97.29 L717.14 96.30" stroke="#fdf0c8" stroke-width="1.98" stroke-linecap="round"/><path d="M721.92 93.72 L717.82 89.62" stroke="#fdf0c8" stroke-width="2.20" stroke-linecap="round"/><path d="M725.49 91.34 L724.50 88.94" stroke="#fdf0c8" stroke-width="1.98" stroke-linecap="round"/><path d="M729.70 90.50 L729.70 80.70" stroke="#fdf0c8" stroke-width="2.53" stroke-linecap="round"/><path d="M733.91 91.34 L734.90 88.94" stroke="#fdf0c8" stroke-width="1.98" stroke-linecap="round"/><path d="M737.48 93.72 L741.58 89.62" stroke="#fdf0c8" stroke-width="2.20" stroke-linecap="round"/><path d="M739.86 97.29 L742.26 96.30" stroke="#fdf0c8" stroke-width="1.98" stroke-linecap="round"/><polygon points="534,286 543.500,275.500 595,275.500 593,281 585.500,299 539,299" fill="#1b2331" filter="url(#blur1)"/><polygon points="543.500,222 559,217.500 602.500,217.500 595.200,222" fill="#f84848"/><polygon points="595.200,222 602.500,217.500 602.500,260.400 595.200,274.300" fill="#f03c3c"/><rect x="543.500" y="222" width="51.700" height="52.300" fill="#f62626"/><path d="M543.500 222 L559 217.500 H602.500 V260.400 L595.200 274.300 H543.500 Z M543.500 222 H595.200 V274.300 M595.200 222 L602.500 217.500" fill="none" stroke="#d8c468" stroke-width=".5"/><path d="M559 217.500 V260.400 L543.500 274.300 M559 260.400 H602.500" fill="none" stroke="#f06a50" stroke-opacity=".7" stroke-width=".4"/><g transform="rotate(22 697 285)"><ellipse cx="697" cy="285" rx="35" ry="12.500" fill="#1a2230" filter="url(#blur1)"/></g><rect x="701.500" y="195.300" width="51" height="97.200" rx="25.500" ry="25.500" fill="url(#gcap)"/><rect x="701.500" y="195.300" width="51" height="97.200" rx="25.500" ry="25.500" fill="url(#gcapb)"/><rect x="701.500" y="195.300" width="51" height="97.200" rx="25.500" ry="25.500" fill="url(#gcaph)"/></svg>
<div class="panel" style="left:1538.00px;top:91.00px;width:382.00px;height:927.12px;"></div>
<div class="tab" style="left:1538.00px;top:76.00px;width:98.00px;height:16.00px;"></div>
<svg style="left:1545px;top:79px;width:11px;height:11px" viewBox="0 0 11 11"><circle cx="5.500" cy="5.500" r="5.200" fill="#222"/><path d="M5.500 4.800 v3.800" stroke="#e0e0e0" stroke-width="1.500"/><circle cx="5.500" cy="2.900" r=".9" fill="#e0e0e0"/></svg>
<span class="t" style="left:1562.50px;top:84.90px;font-size:11.1px">Inspector</span>
<svg style="left:1889px;top:80px;width:9px;height:11px" viewBox="0 0 9 11"><path d="M1 5 h7 v5 h-7z" fill="#555"/><path d="M2.500 5 V3.300 a2 2 0 0 1 4 0 V5" fill="none" stroke="#555" stroke-width="1.2"/></svg>
<svg style="left:1902px;top:83px;width:14px;height:8px" viewBox="0 0 14 8"><path d="M0 3 h3.500 l-1.750 2.200z" fill="#444"/><path d="M5 1 h9 M5 3.500 h9 M5 6 h9" stroke="#666" stroke-width="1.5"/></svg>
<div style="left:1538.00px;top:91.00px;width:367.00px;height:49.62px;background:#dbdbdb;border-top:1px solid #f0f0f0"></div>
<svg style="left:1543.125px;top:99.375px;width:23px;height:22px" viewBox="0 0 23 22"><path d="M11.500 0.500 L22 4.500 L11.500 9 L1 4.500z" fill="#8ccf4a"/><path d="M1 4.500 L11.500 9 V21 L1 16z" fill="#3c9be0"/><path d="M22 4.500 L11.500 9 V21 L22 16z" fill="#e8622a"/><path d="M3 18 h5 l-2.500 3z" fill="#222"/></svg>
<div style="left:1582.25px;top:101.38px;width:11.50px;height:11.50px;background:linear-gradient(#c4d6ee,#86a8dc);border:1px solid #5a78a8;border-radius:2px"></div>
<svg style="left:1582.75px;top:99.875px;width:13px;height:12px" viewBox="0 0 13 12"><path d="M2.200 6.200 L5 9.800 L11 1.500" stroke="#0a0a14" stroke-width="2.300" fill="none"/></svg>
<div class="fld" style="left:1599.75px;top:98.88px;width:231.19px;height:16.00px;"></div>
<span class="t" style="left:1603.25px;top:107.88px;font-size:10.5px">Cube</span>
<div style="left:1836.88px;top:101.38px;width:11.50px;height:11.50px;background:linear-gradient(#f4f4f4,#dedede);border:1px solid #7a7a7a;border-radius:2px"></div>
<span class="t" style="left:1852.50px;top:107.88px;font-size:11.2px;">Static</span>
<svg style="left:1888.125px;top:103.875px;width:9px;height:6px" viewBox="0 0 9 6"><path d="M0 0 h9 l-4.500 6z" fill="#333"/></svg>
<span class="t" style="left:1573.50px;top:127.56px;font-size:11.2px;">Tag</span>
<div class="dd" style="left:1599.38px;top:119.31px;width:132.38px;height:14.50px;"></div>
<span class="t" style="left:1605.38px;top:127.56px;font-size:9.6px;-webkit-text-stroke:0.4px #000">Untagged</span>
<svg style="left:1721.75px;top:122.3125px;width:6px;height:9px" viewBox="0 0 6 9"><path d="M0.500 3.500 L3 0.500 L5.500 3.500z M0.500 5.500 L3 8.500 L5.500 5.500z" fill="#444"/></svg>
<span class="t" style="left:1739.25px;top:127.56px;font-size:11.2px;">Layer</span>
<div class="dd" style="left:1778.25px;top:119.31px;width:120.75px;height:14.50px;"></div>
<span class="t" style="left:1784.25px;top:127.56px;font-size:9.6px;-webkit-text-stroke:0.4px #000">Default</span>
<svg style="left:1889.0px;top:122.3125px;width:6px;height:9px" viewBox="0 0 6 9"><path d="M0.500 3.500 L3 0.500 L5.500 3.500z M0.500 5.500 L3 8.500 L5.500 5.500z" fill="#444"/></svg>
<div style="left:1538.00px;top:140.12px;width:367.00px;height:1.00px;background:#8a8a8a"></div>
<div style="left:1538.00px;top:141.12px;width:367.00px;height:1.00px;background:#d6d6d6"></div>
<svg style="left:1542.375px;top:146.75px;width:9px;height:8px" viewBox="0 0 9 8"><path d="M0 0.500 h9 l-4.500 7.500z" fill="#6e6e6e"/></svg>
<svg style="left:1555.3125px;top:143.4375px;width:15px;height:14px" viewBox="0 0 15 14"><path d="M7.500 8 V1" stroke="#5ad020" stroke-width="1.800"/><path d="M7.500 8 L1.500 12" stroke="#3a80e8" stroke-width="1.800"/><path d="M7.500 8 L13.500 12" stroke="#e83a30" stroke-width="1.800"/></svg>
<span class="t b" style="left:1587.75px;top:151.75px;font-size:11.3px;">Transform</span>
<svg style="left:1852.5px;top:143.75px;width:13px;height:14px" viewBox="0 0 13 14"><rect x="0.500" y="0.500" width="12" height="13" rx="2" fill="#5a84c0" stroke="#3a5a90" stroke-width="1"/><path d="M3 2.500 h5 a2 2 0 0 1 2 2 v7" fill="none" stroke="#dfe8f4" stroke-width="1.600"/><path d="M5.300 6 a1.500 1.500 0 1 1 1.800 1.500 v1.200 M7.100 10 v1.200" stroke="#fff" stroke-width="1.100" fill="none"/></svg>
<svg style="left:1873.125px;top:144.75px;width:12px;height:12px" viewBox="0 0 12 12"><path d="M0 3 h12 M0 9 h12" stroke="#333" stroke-width="1.600"/><path d="M7 0.500 v5 M3.500 6.500 v5" stroke="#333" stroke-width="2.400"/></svg>
<svg style="left:1889.0625px;top:144.25px;width:15px;height:13px" viewBox="0 0 15 13"><circle cx="5.500" cy="6" r="3.300" fill="none" stroke="#333" stroke-width="2.400"/><path d="M5.500 0.500 v2 M5.500 9.500 v2 M0 6 h2 M9 6 h2 M1.600 2.100 l1.400 1.400 M8 8.500 l1.400 1.400 M1.600 9.900 l1.400 -1.400 M8 3.500 l1.400 -1.400" stroke="#333" stroke-width="1.500"/><path d="M11.500 9 h3 l-1.500 2.500z" fill="#333"/></svg>
<span class="t" style="left:1553.44px;top:168.06px;font-size:11.2px;">Position</span>
<span class="t" style="left:1678.12px;top:168.06px;font-size:11px">X</span>
<div class="fld" style="left:1689.38px;top:159.31px;width:59.44px;height:15.50px;"></div>
<span class="t" style="left:1692.88px;top:168.06px;font-size:10.5px">-3.26</span>
<span class="t" style="left:1751.81px;top:168.06px;font-size:11px">Y</span>
<div class="fld" style="left:1764.38px;top:159.31px;width:60.00px;height:15.50px;"></div>
<span class="t" style="left:1767.88px;top:168.06px;font-size:10.5px">0</span>
<span class="t" style="left:1829.44px;top:168.06px;font-size:11px">Z</span>
<div class="fld" style="left:1840.12px;top:159.31px;width:60.00px;height:15.50px;"></div>
<span class="t" style="left:1843.62px;top:168.06px;font-size:10.5px">0</span>
<span class="t" style="left:1553.44px;top:186.06px;font-size:11.2px;">Rotation</span>
<span class="t" style="left:1678.12px;top:186.06px;font-size:11px">X</span>
<div class="fld" style="left:1689.38px;top:177.31px;width:59.44px;height:15.50px;"></div>
<span class="t" style="left:1692.88px;top:186.06px;font-size:10.5px">0</span>
<span class="t" style="left:1751.81px;top:186.06px;font-size:11px">Y</span>
<div class="fld" style="left:1764.38px;top:177.31px;width:60.00px;height:15.50px;"></div>
<span class="t" style="left:1767.88px;top:186.06px;font-size:10.5px">0</span>
<span class="t" style="left:1829.44px;top:186.06px;font-size:11px">Z</span>
<div class="fld" style="left:1840.12px;top:177.31px;width:60.00px;height:15.50px;"></div>
<span class="t" style="left:1843.62px;top:186.06px;font-size:10.5px">0</span>
<span class="t" style="left:1553.44px;top:204.06px;font-size:11.2px;">Scale</span>
<span class="t" style="left:1678.12px;top:204.06px;font-size:11px">X</span>
<div class="fld" style="left:1689.38px;top:195.31px;width:59.44px;height:15.50px;"></div>
<span class="t" style="left:1692.88px;top:204.06px;font-size:10.5px">1</span>
<span class="t" style="left:1751.81px;top:204.06px;font-size:11px">Y</span>
<div class="fld" style="left:1764.38px;top:195.31px;width:60.00px;height:15.50px;"></div>
<span class="t" style="left:1767.88px;top:204.06px;font-size:10.5px">1</span>
<span class="t" style="left:1829.44px;top:204.06px;font-size:11px">Z</span>
<div class="fld" style="left:1840.12px;top:195.31px;width:60.00px;height:15.50px;"></div>
<span class="t" style="left:1843.62px;top:204.06px;font-size:10.5px">1</span>
<div style="left:1538.00px;top:214.56px;width:367.00px;height:1.00px;background:#8a8a8a"></div>
<div style="left:1538.00px;top:215.56px;width:367.00px;height:1.00px;background:#d6d6d6"></div>
<svg style="left:1542.375px;top:221.375px;width:9px;height:8px" viewBox="0 0 9 8"><path d="M0 0.500 h9 l-4.500 7.500z" fill="#6e6e6e"/></svg>
<svg style="left:1557.1875px;top:218.0625px;width:14px;height:14px" viewBox="0 0 14 14"><rect x="0.500" y="0.500" width="13" height="13" fill="#cfe8fa" stroke="#5aa8e0"/><path d="M5 0.500 v13 M9 0.500 v13 M0.500 5 h13 M0.500 9 h13" stroke="#5aa8e0" stroke-width="1"/></svg>
<span class="t b" style="left:1587.75px;top:226.38px;font-size:11.3px;">Cube (Mesh Filter)</span>
<svg style="left:1852.5px;top:218.375px;width:13px;height:14px" viewBox="0 0 13 14"><rect x="0.500" y="0.500" width="12" height="13" rx="2" fill="#5a84c0" stroke="#3a5a90" stroke-width="1"/><path d="M3 2.500 h5 a2 2 0 0 1 2 2 v7" fill="none" stroke="#dfe8f4" stroke-width="1.600"/><path d="M5.300 6 a1.500 1.500 0 1 1 1.800 1.500 v1.200 M7.100 10 v1.200" stroke="#fff" stroke-width="1.100" fill="none"/></svg>
<svg style="left:1873.125px;top:219.375px;width:12px;height:12px" viewBox="0 0 12 12"><path d="M0 3 h12 M0 9 h12" stroke="#333" stroke-width="1.600"/><path d="M7 0.500 v5 M3.500 6.500 v5" stroke="#333" stroke-width="2.400"/></svg>
<svg style="left:1889.0625px;top:218.875px;width:15px;height:13px" viewBox="0 0 15 13"><circle cx="5.500" cy="6" r="3.300" fill="none" stroke="#333" stroke-width="2.400"/><path d="M5.500 0.500 v2 M5.500 9.500 v2 M0 6 h2 M9 6 h2 M1.600 2.100 l1.400 1.400 M8 8.500 l1.400 1.400 M1.600 9.900 l1.400 -1.400 M8 3.500 l1.400 -1.400" stroke="#333" stroke-width="1.500"/><path d="M11.500 9 h3 l-1.500 2.500z" fill="#333"/></svg>
<span class="t" style="left:1553.44px;top:243.25px;font-size:11.2px;">Mesh</span>
<div class="fld" style="left:1677.19px;top:234.50px;width:205.31px;height:15.50px;"></div>
<svg style="left:1680.5625px;top:237.24999999999997px;width:10px;height:10px" viewBox="0 0 10 10"><rect x="0.500" y="0.500" width="9" height="9" fill="#8aa6bc" stroke="#6a8298"/><path d="M3.500 0.500 v9 M6.500 0.500 v9 M0.500 3.500 h9 M0.500 6.500 h9" stroke="#a8c0d0" stroke-width=".7"/></svg>
<span class="t" style="left:1693.12px;top:243.25px;font-size:11px">Cube</span>
<svg style="left:1889.75px;top:238.24999999999997px;width:8px;height:8px" viewBox="0 0 8 8"><circle cx="4" cy="4" r="3" fill="none" stroke="#444" stroke-width="1.100"/><circle cx="4" cy="4" r="1" fill="#444"/></svg>
<div style="left:1538.00px;top:252.62px;width:367.00px;height:1.00px;background:#8a8a8a"></div>
<div style="left:1538.00px;top:253.62px;width:367.00px;height:1.00px;background:#d6d6d6"></div>
<svg style="left:1542.375px;top:260.75px;width:9px;height:8px" viewBox="0 0 9 8"><path d="M0 0.500 h9 l-4.500 7.500z" fill="#6e6e6e"/></svg>
<svg style="left:1556.25px;top:257.4375px;width:15px;height:15px" viewBox="0 0 15 15"><rect x="0.500" y="0.500" width="12" height="12" fill="#cfe8fa" stroke="#5aa8e0"/><path d="M4.500 0.500 v12 M8.500 0.500 v12 M0.500 4.500 h12 M0.500 8.500 h12" stroke="#5aa8e0" stroke-width="1"/><circle cx="11" cy="11.500" r="3" fill="#f4f4f4" stroke="#888" stroke-width=".8"/></svg>
<div style="left:1572.88px;top:259.25px;width:11.50px;height:11.50px;background:linear-gradient(#c4d6ee,#86a8dc);border:1px solid #5a78a8;border-radius:2px"></div>
<svg style="left:1573.375px;top:257.75px;width:13px;height:12px" viewBox="0 0 13 12"><path d="M2.200 6.200 L5 9.800 L11 1.500" stroke="#0a0a14" stroke-width="2.300" fill="none"/></svg>
<span class="t b" style="left:1587.75px;top:265.75px;font-size:11.3px;">Mesh Renderer</span>
<svg style="left:1852.5px;top:257.75px;width:13px;height:14px" viewBox="0 0 13 14"><rect x="0.500" y="0.500" width="12" height="13" rx="2" fill="#5a84c0" stroke="#3a5a90" stroke-width="1"/><path d="M3 2.500 h5 a2 2 0 0 1 2 2 v7" fill="none" stroke="#dfe8f4" stroke-width="1.600"/><path d="M5.300 6 a1.500 1.500 0 1 1 1.800 1.500 v1.200 M7.100 10 v1.200" stroke="#fff" stroke-width="1.100" fill="none"/></svg>
<svg style="left:1873.125px;top:258.75px;width:12px;height:12px" viewBox="0 0 12 12"><path d="M0 3 h12 M0 9 h12" stroke="#333" stroke-width="1.600"/><path d="M7 0.500 v5 M3.500 6.500 v5" stroke="#333" stroke-width="2.400"/></svg>
<svg style="left:1889.0625px;top:258.25px;width:15px;height:13px" viewBox="0 0 15 13"><circle cx="5.500" cy="6" r="3.300" fill="none" stroke="#333" stroke-width="2.400"/><path d="M5.500 0.500 v2 M5.500 9.500 v2 M0 6 h2 M9 6 h2 M1.600 2.100 l1.400 1.400 M8 8.500 l1.400 1.400 M1.600 9.900 l1.400 -1.400 M8 3.500 l1.400 -1.400" stroke="#333" stroke-width="1.500"/><path d="M11.500 9 h3 l-1.500 2.500z" fill="#333"/></svg>
<svg style="left:1541.5px;top:276.75px;width:8px;height:9px" viewBox="0 0 8 9"><path d="M0.500 0 v9 l7.500 -4.500z" fill="#6e6e6e"/></svg>
<span class="t" style="left:1553.44px;top:282.25px;font-size:11.2px;">Lighting</span>
<svg style="left:1540.5px;top:295.0625px;width:9px;height:8px" viewBox="0 0 9 8"><path d="M0 0.500 h9 l-4.500 7.500z" fill="#6e6e6e"/></svg>
<span class="t" style="left:1553.44px;top:300.06px;font-size:11.2px;">Materials</span>
<span class="t" style="left:1568.44px;top:317.88px;font-size:11.2px;">Size</span>
<div class="fld" style="left:1677.19px;top:309.12px;width:222.94px;height:15.50px;"></div>
<span class="t" style="left:1680.69px;top:317.88px;font-size:10.5px">1</span>
<span class="t" style="left:1568.44px;top:336.06px;font-size:11.2px;">Element 0</span>
<div class="fld" style="left:1677.19px;top:327.31px;width:205.31px;height:15.50px;"></div>
<svg style="left:1680.375px;top:329.5625px;width:11px;height:11px" viewBox="0 0 11 11"><circle cx="5.500" cy="5.500" r="5" fill="#4a86d0"/><circle cx="4" cy="3.800" r="2" fill="#a8ccf4"/></svg>
<span class="t" style="left:1693.12px;top:336.06px;font-size:11px">SwatchWhiteAlbedo</span>
<svg style="left:1889.75px;top:331.0625px;width:8px;height:8px" viewBox="0 0 8 8"><circle cx="4" cy="4" r="3" fill="none" stroke="#444" stroke-width="1.100"/><circle cx="4" cy="4" r="1" fill="#444"/></svg>
<span class="t" style="left:1553.44px;top:354.44px;font-size:11.2px;">Dynamic Occluded</span>
<div style="left:1678.25px;top:347.94px;width:11.50px;height:11.50px;background:linear-gradient(#c4d6ee,#86a8dc);border:1px solid #5a78a8;border-radius:2px"></div>
<svg style="left:1678.75px;top:346.4375px;width:13px;height:12px" viewBox="0 0 13 12"><path d="M2.200 6.200 L5 9.800 L11 1.500" stroke="#0a0a14" stroke-width="2.300" fill="none"/></svg>
<svg style="left:1548.75px;top:320.625px;width:361.875px;height:30.0px" viewBox="826 171 193 16"><rect x="827.850" y="173.300" width="188.100" height="11.600" fill="none" stroke="#2be62b" stroke-width="1.900"/></svg>
<div style="left:1538.00px;top:365.12px;width:367.00px;height:1.00px;background:#8a8a8a"></div>
<div style="left:1538.00px;top:366.12px;width:367.00px;height:1.00px;background:#d6d6d6"></div>
<svg style="left:1542.375px;top:371.9375px;width:9px;height:8px" viewBox="0 0 9 8"><path d="M0 0.500 h9 l-4.500 7.500z" fill="#6e6e6e"/></svg>
<svg style="left:1555.3125px;top:368.0625px;width:15px;height:15px" viewBox="0 0 15 15"><path d="M7.500 0.500 L14.500 3.500 L7.500 7 L0.500 3.500z" fill="#b8e070" stroke="#5a9020" stroke-width=".8"/><path d="M0.500 3.500 L7.500 7 V14.500 L0.500 11z" fill="#7cc030" stroke="#5a9020" stroke-width=".8"/><path d="M14.500 3.500 L7.500 7 V14.500 L14.500 11z" fill="#5a9a20" stroke="#4a8018" stroke-width=".8"/></svg>
<div style="left:1572.88px;top:370.44px;width:11.50px;height:11.50px;background:linear-gradient(#c4d6ee,#86a8dc);border:1px solid #5a78a8;border-radius:2px"></div>
<svg style="left:1573.375px;top:368.9375px;width:13px;height:12px" viewBox="0 0 13 12"><path d="M2.200 6.200 L5 9.800 L11 1.500" stroke="#0a0a14" stroke-width="2.300" fill="none"/></svg>
<span class="t b" style="left:1587.75px;top:376.94px;font-size:11.3px;">Box Collider</span>
<svg style="left:1852.5px;top:368.9375px;width:13px;height:14px" viewBox="0 0 13 14"><rect x="0.500" y="0.500" width="12" height="13" rx="2" fill="#5a84c0" stroke="#3a5a90" stroke-width="1"/><path d="M3 2.500 h5 a2 2 0 0 1 2 2 v7" fill="none" stroke="#dfe8f4" stroke-width="1.600"/><path d="M5.300 6 a1.500 1.500 0 1 1 1.800 1.500 v1.200 M7.100 10 v1.200" stroke="#fff" stroke-width="1.100" fill="none"/></svg>
<svg style="left:1873.125px;top:369.9375px;width:12px;height:12px" viewBox="0 0 12 12"><path d="M0 3 h12 M0 9 h12" stroke="#333" stroke-width="1.600"/><path d="M7 0.500 v5 M3.500 6.500 v5" stroke="#333" stroke-width="2.400"/></svg>
<svg style="left:1889.0625px;top:369.4375px;width:15px;height:13px" viewBox="0 0 15 13"><circle cx="5.500" cy="6" r="3.300" fill="none" stroke="#333" stroke-width="2.400"/><path d="M5.500 0.500 v2 M5.500 9.500 v2 M0 6 h2 M9 6 h2 M1.600 2.100 l1.400 1.400 M8 8.500 l1.400 1.400 M1.600 9.900 l1.400 -1.400 M8 3.500 l1.400 -1.400" stroke="#333" stroke-width="1.500"/><path d="M11.500 9 h3 l-1.500 2.500z" fill="#333"/></svg>
<div class="btn" style="left:1676.62px;top:387.19px;width:32.44px;height:21.56px;"></div>
<svg style="left:1681.875px;top:390.0px;width:22px;height:16px" viewBox="0 0 22 16"><path d="M4 13 L7 5 H13 L18 13" fill="none" stroke="#333" stroke-width="1.200"/><rect x="2.500" y="11.500" width="3" height="3" fill="#333"/><rect x="16.500" y="11.500" width="3" height="3" fill="#333"/><rect x="5.500" y="3.500" width="3" height="3" fill="#333"/><rect x="11.500" y="3.500" width="3" height="3" fill="#333"/></svg>
<span class="t" style="left:1717.31px;top:399.06px;font-size:11.2px;">Edit Collider</span>
<span class="t" style="left:1553.44px;top:422.31px;font-size:11.2px;">Is Trigger</span>
<div style="left:1678.25px;top:415.81px;width:11.50px;height:11.50px;background:linear-gradient(#f4f4f4,#dedede);border:1px solid #7a7a7a;border-radius:2px"></div>
<span class="t" style="left:1553.44px;top:440.12px;font-size:11.2px;">Material</span>
<div class="fld" style="left:1677.19px;top:431.38px;width:205.31px;height:15.50px;"></div>
<span class="t" style="left:1680.94px;top:440.12px;font-size:11px">None (Physic Material)</span>
<svg style="left:1889.75px;top:435.125px;width:8px;height:8px" viewBox="0 0 8 8"><circle cx="4" cy="4" r="3" fill="none" stroke="#444" stroke-width="1.100"/><circle cx="4" cy="4" r="1" fill="#444"/></svg>
<span class="t" style="left:1553.44px;top:458.12px;font-size:11.2px;">Center</span>
<span class="t" style="left:1678.12px;top:458.12px;font-size:11px">X</span>
<div class="fld" style="left:1689.38px;top:449.38px;width:59.44px;height:15.50px;"></div>
<span class="t" style="left:1692.88px;top:458.12px;font-size:10.5px">0</span>
<span class="t" style="left:1751.81px;top:458.12px;font-size:11px">Y</span>
<div class="fld" style="left:1764.38px;top:449.38px;width:60.00px;height:15.50px;"></div>
<span class="t" style="left:1767.88px;top:458.12px;font-size:10.5px">0</span>
<span class="t" style="left:1829.44px;top:458.12px;font-size:11px">Z</span>
<div class="fld" style="left:1840.12px;top:449.38px;width:60.00px;height:15.50px;"></div>
<span class="t" style="left:1843.62px;top:458.12px;font-size:10.5px">0</span>
<span class="t" style="left:1553.44px;top:476.12px;font-size:11.2px;">Size</span>
<span class="t" style="left:1678.12px;top:476.12px;font-size:11px">X</span>
<div class="fld" style="left:1689.38px;top:467.38px;width:59.44px;height:15.50px;"></div>
<span class="t" style="left:1692.88px;top:476.12px;font-size:10.5px">1</span>
<span class="t" style="left:1751.81px;top:476.12px;font-size:11px">Y</span>
<div class="fld" style="left:1764.38px;top:467.38px;width:60.00px;height:15.50px;"></div>
<span class="t" style="left:1767.88px;top:476.12px;font-size:10.5px">1</span>
<span class="t" style="left:1829.44px;top:476.12px;font-size:11px">Z</span>
<div class="fld" style="left:1840.12px;top:467.38px;width:60.00px;height:15.50px;"></div>
<span class="t" style="left:1843.62px;top:476.12px;font-size:10.5px">1</span>
<div style="left:1538.00px;top:487.94px;width:367.00px;height:1.00px;background:#7a7a7a"></div>
<div style="left:1538.00px;top:488.94px;width:367.00px;height:1.00px;background:#d6d6d6"></div>
<div style="left:1538.00px;top:489.00px;width:367.00px;height:46.31px;background:#d0d0d0;border-top:1px solid #e8e8e8"></div>
<svg style="left:1553.8125px;top:496.875px;width:31px;height:31px" viewBox="0 0 31 31"><defs><radialGradient id="matg" cx=".38" cy=".3" r=".7"><stop offset="0" stop-color="#d04040"/><stop offset=".35" stop-color="#9a1414"/><stop offset="1" stop-color="#2a0404"/></radialGradient></defs><rect width="31" height="31" fill="#d6d6d6"/><circle cx="15.500" cy="15.500" r="13.500" fill="url(#matg)"/></svg>
<svg style="left:1541.4375px;top:523.8125px;width:9px;height:8px" viewBox="0 0 9 8"><path d="M0 0.500 h9 l-4.500 7.500z" fill="#6e6e6e"/></svg>
<span class="t" style="left:1592.81px;top:505.31px;font-size:12px;color:#222">SwatchWhiteAlbedo</span>
<svg style="left:1852.5px;top:498.3125px;width:13px;height:14px" viewBox="0 0 13 14"><rect x="0.500" y="0.500" width="12" height="13" rx="2" fill="#5a84c0" stroke="#3a5a90" stroke-width="1"/><path d="M3 2.500 h5 a2 2 0 0 1 2 2 v7" fill="none" stroke="#dfe8f4" stroke-width="1.600"/><path d="M5.300 6 a1.500 1.500 0 1 1 1.800 1.500 v1.200 M7.100 10 v1.200" stroke="#fff" stroke-width="1.100" fill="none"/></svg>
<svg style="left:1873.125px;top:499.3125px;width:12px;height:12px" viewBox="0 0 12 12"><path d="M0 3 h12 M0 9 h12" stroke="#333" stroke-width="1.600"/><path d="M7 0.500 v5 M3.500 6.500 v5" stroke="#333" stroke-width="2.400"/></svg>
<svg style="left:1889.0625px;top:498.8125px;width:15px;height:13px" viewBox="0 0 15 13"><circle cx="5.500" cy="6" r="3.300" fill="none" stroke="#333" stroke-width="2.400"/><path d="M5.500 0.500 v2 M5.500 9.500 v2 M0 6 h2 M9 6 h2 M1.600 2.100 l1.400 1.400 M8 8.500 l1.400 1.400 M1.600 9.900 l1.400 -1.400 M8 3.500 l1.400 -1.400" stroke="#333" stroke-width="1.500"/><path d="M11.500 9 h3 l-1.500 2.500z" fill="#333"/></svg>
<span class="t" style="left:1592.81px;top:525.25px;font-size:11.2px;">Shader</span>
<div class="dd" style="left:1642.12px;top:517.00px;width:256.88px;height:14.50px;"></div>
<span class="t" style="left:1648.12px;top:525.25px;font-size:9.6px;-webkit-text-stroke:0.4px #000">Standard (Specular setup)</span>
<svg style="left:1888.0px;top:522.0px;width:7px;height:5px" viewBox="0 0 7 5"><path d="M0.500 0.500 h6 l-3 4z" fill="#444"/></svg>
<div style="left:1538.00px;top:534.81px;width:367.00px;height:1.00px;background:#9a9a9a"></div>
<div style="left:1538.00px;top:535.81px;width:367.00px;height:1.00px;background:#d6d6d6"></div>
<span class="t" style="left:1553.44px;top:551.12px;font-size:11.2px;">Rendering Mode</span>
<div class="dd" style="left:1677.19px;top:542.88px;width:222.19px;height:14.50px;"></div>
<span class="t" style="left:1683.19px;top:551.12px;font-size:9.6px;-webkit-text-stroke:0.4px #000">Opaque</span>
<svg style="left:1889.375px;top:545.875px;width:6px;height:9px" viewBox="0 0 6 9"><path d="M0.500 3.500 L3 0.500 L5.500 3.500z M0.500 5.500 L3 8.500 L5.500 5.500z" fill="#444"/></svg>
<span class="t b" style="left:1553.44px;top:573.81px;font-size:11.3px;">Main Maps</span>
<div style="left:1552.31px;top:583.44px;width:17.00px;height:17.00px;background:#fff;border:1px solid #9a9a9a;border-top-color:#858585"></div>
<svg style="left:1571.8125px;top:588.4375px;width:7px;height:7px" viewBox="0 0 7 7"><circle cx="3.500" cy="3.500" r="2.500" fill="none" stroke="#333" stroke-width="1.100"/></svg>
<span class="t" style="left:1582.12px;top:592.94px;font-size:11.2px;">Albedo</span>
<div style="left:1677.19px;top:584.44px;width:31.88px;height:15.00px;background:#f00000;border:1px solid #6a6a6a"></div>
<div style="left:1678.19px;top:595.44px;width:29.88px;height:3.00px;background:#fff"></div>
<svg style="left:1712.0625px;top:584.4375px;width:15px;height:15px" viewBox="0 0 15 15"><path d="M1.500 13.500 L2.500 10.500 L9 4 L11 6 L4.500 12.500 Z" fill="#ddd" stroke="#333" stroke-width="1"/><path d="M8.500 3 L12 6.500 M10 4.500 L12.500 2 a1.300 1.300 0 0 1 1.500 1.500 L11.500 6" stroke="#222" stroke-width="1.800" fill="none"/></svg>
<div style="left:1552.31px;top:603.69px;width:17.00px;height:17.00px;background:#cdcdcd;border:1px solid #9a9a9a;border-top-color:#858585"></div>
<svg style="left:1571.8125px;top:608.6875px;width:7px;height:7px" viewBox="0 0 7 7"><circle cx="3.500" cy="3.500" r="2.500" fill="none" stroke="#333" stroke-width="1.100"/></svg>
<span class="t" style="left:1582.12px;top:613.19px;font-size:11.2px;">Specular</span>
<div style="left:1677.19px;top:604.69px;width:31.88px;height:15.00px;background:#333333;border:1px solid #6a6a6a"></div>
<div style="left:1678.19px;top:615.69px;width:29.88px;height:3.00px;background:#fff"></div>
<svg style="left:1712.0625px;top:604.6875px;width:15px;height:15px" viewBox="0 0 15 15"><path d="M1.500 13.500 L2.500 10.500 L9 4 L11 6 L4.500 12.500 Z" fill="#ddd" stroke="#333" stroke-width="1"/><path d="M8.500 3 L12 6.500 M10 4.500 L12.500 2 a1.300 1.300 0 0 1 1.500 1.500 L11.500 6" stroke="#222" stroke-width="1.800" fill="none"/></svg>
<span class="t" style="left:1583.44px;top:633.25px;font-size:11.2px;">Smoothness</span>
<div style="left:1678.12px;top:631.25px;width:167.81px;height:2.00px;background:#7e7e7e;border-radius:1px"></div>
<div style="left:1755.50px;top:626.75px;width:11.00px;height:11.00px;background:#e8e8e8;border:1px solid #555;border-radius:5.5px"></div>
<div class="fld" style="left:1851.38px;top:624.50px;width:48.75px;height:15.50px;"></div>
<span class="t" style="left:1854.88px;top:633.25px;font-size:10.5px">0.5</span>
<span class="t" style="left:1598.25px;top:651.06px;font-size:11.2px;">Source</span>
<div class="dd" style="left:1677.19px;top:642.81px;width:222.19px;height:14.50px;"></div>
<span class="t" style="left:1683.19px;top:651.06px;font-size:9.6px;-webkit-text-stroke:0.4px #000">Specular Alpha</span>
<svg style="left:1889.375px;top:645.8125px;width:6px;height:9px" viewBox="0 0 6 9"><path d="M0.500 3.500 L3 0.500 L5.500 3.500z M0.500 5.500 L3 8.500 L5.500 5.500z" fill="#444"/></svg>
<div style="left:1552.31px;top:660.12px;width:17.00px;height:17.00px;background:#cdcdcd;border:1px solid #9a9a9a;border-top-color:#858585"></div>
<svg style="left:1571.8125px;top:665.125px;width:7px;height:7px" viewBox="0 0 7 7"><circle cx="3.500" cy="3.500" r="2.500" fill="none" stroke="#333" stroke-width="1.100"/></svg>
<span class="t" style="left:1582.12px;top:669.62px;font-size:11.2px;">Normal Map</span>
<div style="left:1552.31px;top:680.00px;width:17.00px;height:17.00px;background:#cdcdcd;border:1px solid #9a9a9a;border-top-color:#858585"></div>
<svg style="left:1571.8125px;top:685.0px;width:7px;height:7px" viewBox="0 0 7 7"><circle cx="3.500" cy="3.500" r="2.500" fill="none" stroke="#333" stroke-width="1.100"/></svg>
<span class="t" style="left:1582.12px;top:689.50px;font-size:11.2px;">Height Map</span>
<div style="left:1552.31px;top:699.88px;width:17.00px;height:17.00px;background:#cdcdcd;border:1px solid #9a9a9a;border-top-color:#858585"></div>
<svg style="left:1571.8125px;top:704.875px;width:7px;height:7px" viewBox="0 0 7 7"><circle cx="3.500" cy="3.500" r="2.500" fill="none" stroke="#333" stroke-width="1.100"/></svg>
<span class="t" style="left:1582.12px;top:709.38px;font-size:11.2px;">Occlusion</span>
<div style="left:1552.31px;top:719.94px;width:17.00px;height:17.00px;background:#cdcdcd;border:1px solid #9a9a9a;border-top-color:#858585"></div>
<svg style="left:1571.8125px;top:724.9375px;width:7px;height:7px" viewBox="0 0 7 7"><circle cx="3.500" cy="3.500" r="2.500" fill="none" stroke="#333" stroke-width="1.100"/></svg>
<span class="t" style="left:1582.12px;top:729.44px;font-size:11.2px;">Detail Mask</span>
<span class="t" style="left:1553.44px;top:749.50px;font-size:11.2px;">Emission</span>
<div style="left:1678.25px;top:743.00px;width:11.50px;height:11.50px;background:linear-gradient(#f4f4f4,#dedede);border:1px solid #7a7a7a;border-radius:2px"></div>
<span class="t" style="left:1553.44px;top:766.75px;font-size:11.2px;">Tiling</span>
<span class="t" style="left:1679.25px;top:766.75px;font-size:11px">X</span>
<div class="fld" style="left:1690.12px;top:758.00px;width:97.50px;height:15.50px;"></div>
<span class="t" style="left:1693.62px;top:766.75px;font-size:10.5px">1</span>
<span class="t" style="left:1793.25px;top:766.75px;font-size:11px">Y</span>
<div class="fld" style="left:1803.75px;top:758.00px;width:96.38px;height:15.50px;"></div>
<span class="t" style="left:1807.25px;top:766.75px;font-size:10.5px">1</span>
<span class="t" style="left:1553.44px;top:783.25px;font-size:11.2px;">Offset</span>
<span class="t" style="left:1679.25px;top:783.25px;font-size:11px">X</span>
<div class="fld" style="left:1690.12px;top:774.50px;width:97.50px;height:15.50px;"></div>
<span class="t" style="left:1693.62px;top:783.25px;font-size:10.5px">0</span>
<span class="t" style="left:1793.25px;top:783.25px;font-size:11px">Y</span>
<div class="fld" style="left:1803.75px;top:774.50px;width:96.38px;height:15.50px;"></div>
<span class="t" style="left:1807.25px;top:783.25px;font-size:10.5px">0</span>
<span class="t b" style="left:1553.44px;top:813.44px;font-size:11.3px;">Secondary Maps</span>
<div style="left:1552.31px;top:824.00px;width:17.00px;height:17.00px;background:#cdcdcd;border:1px solid #9a9a9a;border-top-color:#858585"></div>
<svg style="left:1571.8125px;top:829.0px;width:7px;height:7px" viewBox="0 0 7 7"><circle cx="3.500" cy="3.500" r="2.500" fill="none" stroke="#333" stroke-width="1.100"/></svg>
<span class="t" style="left:1582.12px;top:833.50px;font-size:11.2px;">Detail Albedo x2</span>
<div style="left:1552.31px;top:844.06px;width:17.00px;height:17.00px;background:#cdcdcd;border:1px solid #9a9a9a;border-top-color:#858585"></div>
<svg style="left:1571.8125px;top:849.0625px;width:7px;height:7px" viewBox="0 0 7 7"><circle cx="3.500" cy="3.500" r="2.500" fill="none" stroke="#333" stroke-width="1.100"/></svg>
<span class="t" style="left:1582.12px;top:853.56px;font-size:11.2px;">Normal Map</span>
<div class="fld" style="left:1851.38px;top:844.81px;width:48.75px;height:15.50px;"></div>
<span class="t" style="left:1854.88px;top:853.56px;font-size:10.5px">1</span>
<span class="t" style="left:1553.44px;top:872.88px;font-size:11.2px;">Tiling</span>
<span class="t" style="left:1679.25px;top:872.88px;font-size:11px">X</span>
<div class="fld" style="left:1690.12px;top:864.12px;width:97.50px;height:15.50px;"></div>
<span class="t" style="left:1693.62px;top:872.88px;font-size:10.5px">1</span>
<span class="t" style="left:1793.25px;top:872.88px;font-size:11px">Y</span>
<div class="fld" style="left:1803.75px;top:864.12px;width:96.38px;height:15.50px;"></div>
<span class="t" style="left:1807.25px;top:872.88px;font-size:10.5px">1</span>
<span class="t" style="left:1553.44px;top:889.19px;font-size:11.2px;">Offset</span>
<span class="t" style="left:1679.25px;top:889.19px;font-size:11px">X</span>
<div class="fld" style="left:1690.12px;top:880.44px;width:97.50px;height:15.50px;"></div>
<span class="t" style="left:1693.62px;top:889.19px;font-size:10.5px">0</span>
<span class="t" style="left:1793.25px;top:889.19px;font-size:11px">Y</span>
<div class="fld" style="left:1803.75px;top:880.44px;width:96.38px;height:15.50px;"></div>
<span class="t" style="left:1807.25px;top:889.19px;font-size:10.5px">0</span>
<span class="t" style="left:1553.44px;top:907.19px;font-size:11.2px;">UV Set</span>
<div class="dd" style="left:1677.19px;top:898.94px;width:222.19px;height:14.50px;"></div>
<span class="t" style="left:1683.19px;top:907.19px;font-size:9.6px;-webkit-text-stroke:0.4px #000">UV0</span>
<svg style="left:1889.375px;top:901.9375px;width:6px;height:9px" viewBox="0 0 6 9"><path d="M0.500 3.500 L3 0.500 L5.500 3.500z M0.500 5.500 L3 8.500 L5.500 5.500z" fill="#444"/></svg>
<span class="t b" style="left:1553.44px;top:929.88px;font-size:11.3px;">Forward Rendering Options</span>
<span class="t" style="left:1553.44px;top:949.38px;font-size:11.2px;">Specular Highlights</span>
<div style="left:1678.25px;top:942.88px;width:11.50px;height:11.50px;background:linear-gradient(#c4d6ee,#86a8dc);border:1px solid #5a78a8;border-radius:2px"></div>
<svg style="left:1678.75px;top:941.375px;width:13px;height:12px" viewBox="0 0 13 12"><path d="M2.200 6.200 L5 9.800 L11 1.500" stroke="#0a0a14" stroke-width="2.300" fill="none"/></svg>
<span class="t" style="left:1553.44px;top:967.00px;font-size:11.2px;">Reflections</span>
<div style="left:1678.25px;top:960.50px;width:11.50px;height:11.50px;background:linear-gradient(#c4d6ee,#86a8dc);border:1px solid #5a78a8;border-radius:2px"></div>
<svg style="left:1678.75px;top:959.0000000000001px;width:13px;height:12px" viewBox="0 0 13 12"><path d="M2.200 6.200 L5 9.800 L11 1.500" stroke="#0a0a14" stroke-width="2.300" fill="none"/></svg>
<span class="t b" style="left:1553.44px;top:997.19px;font-size:11.3px;">Advanced Options</span>
<span class="t" style="left:1553.44px;top:1016.50px;font-size:11.2px;">Enable GPU Instancin</span>
<div style="left:1678.25px;top:1010.00px;width:11.50px;height:11.50px;background:linear-gradient(#f4f4f4,#dedede);border:1px solid #7a7a7a;border-radius:2px"></div>
<span class="t" style="left:1599.00px;top:959.06px;font:19.9px 'Liberation Sans',sans-serif;color:rgba(120,120,120,.5)">Activate Windows</span>
<span class="t" style="left:1599.00px;top:981.19px;font:14.85px 'Liberation Sans',sans-serif;color:rgba(120,120,120,.45)">Go to Settings to activate Windows.</span>
<svg style="left:1535.625px;top:562.5px;width:210.0px;height:45.0px" viewBox="819 300 112 24"><rect x="821.700" y="301.100" width="106" height="20" fill="none" stroke="#f01a1a" stroke-width="1.950"/></svg>
<div style="left:1905.00px;top:91.00px;width:15.00px;height:927.12px;background:#c8c8c8;border-left:1px solid #a8a8a8"></div>
<div style="left:1905.94px;top:108.75px;width:13.06px;height:822.00px;background:linear-gradient(90deg,#5878a8,#7a98c4 40%,#6a88b8);border:1px solid #4a6690;border-radius:6px"></div>
<svg style="left:1907.8125px;top:95.625px;width:9px;height:7px" viewBox="0 0 9 7"><path d="M0 7 h9 l-4.500 -7z" fill="#333"/></svg>
<svg style="left:1907.8125px;top:1005.9375px;width:9px;height:7px" viewBox="0 0 9 7"><path d="M0 0 h9 l-4.500 7z" fill="#333"/></svg>
<div style="left:0.00px;top:1018.12px;width:1920.00px;height:22.88px;background:#a2a2a2"></div>
<svg style="left:0;top:0;width:0;height:0"><defs><linearGradient id="foldg" x1="0" y1="0" x2="0" y2="1"><stop offset="0" stop-color="#b4b4b4"/><stop offset=".35" stop-color="#a0a0a0"/><stop offset=".8" stop-color="#6c6c6c"/><stop offset="1" stop-color="#4a4a4a"/></linearGradient></defs></svg>
<div class="panel" style="left:0.00px;top:647.00px;width:1534.00px;height:371.12px;"></div>
<div class="tab" style="left:-1.00px;top:631.30px;width:98.00px;height:16.70px;"></div>
<svg style="left:8px;top:635px;width:13px;height:11px" viewBox="0 0 13 11"><path d="M0.500 2 h4 l1 1.500 h7 v7 h-12z" fill="#777" stroke="#444" stroke-width=".9"/></svg>
<span class="t" style="left:23.00px;top:640.00px;font-size:11.8px">Project</span>
<svg style="left:109.500px;top:634.5px;width:11px;height:12px" viewBox="0 0 11 12"><rect x="0.500" y="0.500" width="10" height="11" rx="1.500" fill="#ddd" stroke="#444" stroke-width="1"/><path d="M2.500 3.500 h6 M2.500 6 h6 M2.500 8.500 h4" stroke="#888" stroke-width="1"/></svg>
<span class="t" style="left:124.00px;top:640.00px;font-size:11.7px;color:#222">Console</span>
<svg style="left:1503px;top:634px;width:9px;height:11px" viewBox="0 0 9 11"><path d="M1 5 h7 v5 h-7z" fill="#555"/><path d="M2.500 5 V3.300 a2 2 0 0 1 4 0 V5" fill="none" stroke="#555" stroke-width="1.2"/></svg>
<svg style="left:1516px;top:637px;width:14px;height:8px" viewBox="0 0 14 8"><path d="M0 3 h3.500 l-1.750 2.200z" fill="#444"/><path d="M5 1 h9 M5 3.500 h9 M5 6 h9" stroke="#666" stroke-width="1.5"/></svg>
<div class="ptb" style="left:0.00px;top:647.00px;width:1534.00px;height:18.00px;"></div>
<div style="left:7.00px;top:648.00px;width:1.00px;height:16.00px;background:#9a9a9a"></div>
<span class="t" style="left:13.00px;top:657.50px;font-size:10px">Create</span>
<svg style="left:50px;top:653px;width:7px;height:5px" viewBox="0 0 7 5"><path d="M0.500 0.500 h6 l-3 4z" fill="#444"/></svg>
<div style="left:57.50px;top:648.00px;width:1.00px;height:16.00px;background:#9a9a9a"></div>
<div style="left:1152.38px;top:649.00px;width:298.88px;height:13.00px;background:linear-gradient(#d0d0d0,#e2e2e2);border:1px solid #8a8a8a;border-radius:8px;box-shadow:inset 0 1px 1px rgba(0,0,0,.2)"></div>
<svg style="left:1158.375px;top:652px;width:12px;height:9px" viewBox="0 0 12 9"><circle cx="3.500" cy="3.700" r="2.600" fill="none" stroke="#6a6a6a" stroke-width="1.1"/><path d="M5.300 5.700 L7.500 8.200" stroke="#6a6a6a" stroke-width="1.2"/><path d="M8 3.500 h3 l-1.500 2z" fill="#6a6a6a"/></svg>
<div style="left:1460.62px;top:648.00px;width:1.00px;height:16.00px;background:#9a9a9a"></div>
<div style="left:1484.06px;top:648.00px;width:1.00px;height:16.00px;background:#9a9a9a"></div>
<div style="left:1505.62px;top:648.00px;width:1.00px;height:16.00px;background:#9a9a9a"></div>
<svg style="left:1465.3125px;top:650px;width:14px;height:13px" viewBox="0 0 14 13"><circle cx="4" cy="4" r="2.800" fill="#555"/><rect x="7" y="1.500" width="5.500" height="5.500" fill="#555"/><path d="M3 12 l3.500 -5.500 l3.500 5.500z" fill="#555"/></svg>
<svg style="left:1487.8125px;top:650px;width:14px;height:13px" viewBox="0 0 14 13"><path d="M1 1 h6 l6 6 l-5 5 l-7 -6.500z" fill="#555"/><circle cx="4" cy="4" r="1.300" fill="#ddd"/></svg>
<svg style="left:1510.3125px;top:650px;width:14px;height:13px" viewBox="0 0 14 13"><path d="M7 0.500 l2 4.200 l4.500 .5 l-3.300 3.100 l.9 4.500 l-4.100 -2.300 l-4.100 2.300 l.9 -4.500 l-3.300 -3.100 l4.500 -.5z" fill="#888"/></svg>
<div style="left:280.69px;top:665.00px;width:1.00px;height:353.12px;background:#8a8a8a"></div>
<svg style="left:2.5px;top:670px;width:9px;height:8px" viewBox="0 0 9 8"><path d="M0 0.500 h9 l-4.500 7.500z" fill="#6a6a6a"/></svg>
<svg style="left:15px;top:666px;width:17px;height:16px" viewBox="0 0 17 16"><path d="M8.500 0.800 l2.300 4.800 l5.200 .6 l-3.800 3.600 l1 5.200 l-4.700 -2.600 l-4.700 2.600 l1 -5.200 l-3.800 -3.600 l5.200 -.6z" fill="#ffd21e" stroke="#e0a800" stroke-width=".8"/></svg>
<span class="t b" style="left:34.00px;top:674.50px;font-size:11.8px">Favorites</span>
<svg style="left:29.5px;top:682px;width:17px;height:17px" viewBox="0 0 15 15"><circle cx="6" cy="6" r="4.300" fill="#f4f0d8" stroke="#e0b000" stroke-width="1.800"/><path d="M9.200 9.200 L13.500 13.500" stroke="#d8a800" stroke-width="2.600" stroke-linecap="round"/></svg>
<span class="t" style="left:48.00px;top:690.50px;font-size:11.3px">All Materials</span>
<svg style="left:29.5px;top:698px;width:17px;height:17px" viewBox="0 0 15 15"><circle cx="6" cy="6" r="4.300" fill="#f4f0d8" stroke="#e0b000" stroke-width="1.800"/><path d="M9.200 9.200 L13.500 13.500" stroke="#d8a800" stroke-width="2.600" stroke-linecap="round"/></svg>
<span class="t" style="left:48.00px;top:706.50px;font-size:11.3px">All Models</span>
<svg style="left:29.5px;top:714px;width:17px;height:17px" viewBox="0 0 15 15"><circle cx="6" cy="6" r="4.300" fill="#f4f0d8" stroke="#e0b000" stroke-width="1.800"/><path d="M9.200 9.200 L13.500 13.500" stroke="#d8a800" stroke-width="2.600" stroke-linecap="round"/></svg>
<span class="t" style="left:48.00px;top:722.50px;font-size:11.3px">All Prefabs</span>
<svg style="left:2.5px;top:750px;width:9px;height:8px" viewBox="0 0 9 8"><path d="M0 0.500 h9 l-4.500 7.500z" fill="#6a6a6a"/></svg>
<svg style="left:16px;top:747.5px;width:16px;height:13px" viewBox="0 0 16 13"><path d="M0.800 2.800 a1.300 1.300 0 0 1 1.300 -1.300 h3.800 l1.300 1.400 h6.700 a1.300 1.300 0 0 1 1.300 1.300 v6.800 a1.300 1.300 0 0 1 -1.300 1.300 h-11.800 a1.300 1.300 0 0 1 -1.300 -1.300z" fill="url(#foldg)" stroke="#5e5e5e" stroke-width=".9"/><path d="M1.800 4.700 h12.400" stroke="#e0e0e0" stroke-opacity=".8" stroke-width="1.100"/></svg>
<span class="t b" style="left:34.00px;top:754.50px;font-size:11.8px">Assets</span>
<svg style="left:30px;top:763.5px;width:16px;height:13px" viewBox="0 0 16 13"><path d="M0.800 2.800 a1.300 1.300 0 0 1 1.300 -1.300 h3.800 l1.300 1.400 h6.700 a1.300 1.300 0 0 1 1.300 1.300 v6.800 a1.300 1.300 0 0 1 -1.300 1.300 h-11.800 a1.300 1.300 0 0 1 -1.300 -1.300z" fill="url(#foldg)" stroke="#5e5e5e" stroke-width=".9"/><path d="M1.800 4.700 h12.400" stroke="#e0e0e0" stroke-opacity=".8" stroke-width="1.100"/></svg>
<span class="t" style="left:48.00px;top:770.50px;font-size:11.3px">Scenes</span>
<svg style="left:16.5px;top:782px;width:9px;height:8px" viewBox="0 0 9 8"><path d="M0 0.500 h9 l-4.500 7.500z" fill="#6a6a6a"/></svg>
<svg style="left:30px;top:779.5px;width:16px;height:13px" viewBox="0 0 16 13"><path d="M0.800 2.800 a1.300 1.300 0 0 1 1.300 -1.300 h3.800 l1.300 1.400 h6.700 a1.300 1.300 0 0 1 1.300 1.300 v6.800 a1.300 1.300 0 0 1 -1.300 1.300 h-11.800 a1.300 1.300 0 0 1 -1.300 -1.300z" fill="url(#foldg)" stroke="#5e5e5e" stroke-width=".9"/><path d="M1.800 4.700 h12.400" stroke="#e0e0e0" stroke-opacity=".8" stroke-width="1.100"/></svg>
<span class="t" style="left:48.00px;top:786.50px;font-size:11.3px">Standard Assets</span>
<svg style="left:31.5px;top:797.5px;width:8px;height:9px" viewBox="0 0 8 9"><path d="M0.500 0 v9 l7.500 -4.500z" fill="#6a6a6a"/></svg>
<svg style="left:44px;top:795.5px;width:16px;height:13px" viewBox="0 0 16 13"><path d="M0.800 2.800 a1.300 1.300 0 0 1 1.300 -1.300 h3.800 l1.300 1.400 h6.700 a1.300 1.300 0 0 1 1.300 1.300 v6.800 a1.300 1.300 0 0 1 -1.300 1.300 h-11.800 a1.300 1.300 0 0 1 -1.300 -1.300z" fill="url(#foldg)" stroke="#5e5e5e" stroke-width=".9"/><path d="M1.800 4.700 h12.400" stroke="#e0e0e0" stroke-opacity=".8" stroke-width="1.100"/></svg>
<span class="t" style="left:62.00px;top:802.50px;font-size:11.3px">CrossPlatformInput</span>
<svg style="left:31.5px;top:813.5px;width:8px;height:9px" viewBox="0 0 8 9"><path d="M0.500 0 v9 l7.500 -4.500z" fill="#6a6a6a"/></svg>
<svg style="left:44px;top:811.5px;width:16px;height:13px" viewBox="0 0 16 13"><path d="M0.800 2.800 a1.300 1.300 0 0 1 1.300 -1.300 h3.800 l1.300 1.400 h6.700 a1.300 1.300 0 0 1 1.300 1.300 v6.800 a1.300 1.300 0 0 1 -1.300 1.300 h-11.800 a1.300 1.300 0 0 1 -1.300 -1.300z" fill="url(#foldg)" stroke="#5e5e5e" stroke-width=".9"/><path d="M1.800 4.700 h12.400" stroke="#e0e0e0" stroke-opacity=".8" stroke-width="1.100"/></svg>
<span class="t" style="left:62.00px;top:818.50px;font-size:11.3px">Editor</span>
<svg style="left:30.5px;top:830px;width:9px;height:8px" viewBox="0 0 9 8"><path d="M0 0.500 h9 l-4.500 7.500z" fill="#6a6a6a"/></svg>
<svg style="left:44px;top:827.5px;width:16px;height:13px" viewBox="0 0 16 13"><path d="M0.800 2.800 a1.300 1.300 0 0 1 1.300 -1.300 h3.800 l1.300 1.400 h6.700 a1.300 1.300 0 0 1 1.300 1.300 v6.800 a1.300 1.300 0 0 1 -1.300 1.300 h-11.800 a1.300 1.300 0 0 1 -1.300 -1.300z" fill="url(#foldg)" stroke="#5e5e5e" stroke-width=".9"/><path d="M1.800 4.700 h12.400" stroke="#e0e0e0" stroke-opacity=".8" stroke-width="1.100"/></svg>
<span class="t" style="left:62.00px;top:834.50px;font-size:11.3px">Prototyping</span>
<svg style="left:58px;top:843.5px;width:16px;height:13px" viewBox="0 0 16 13"><path d="M0.800 2.800 a1.300 1.300 0 0 1 1.300 -1.300 h3.800 l1.300 1.400 h6.700 a1.300 1.300 0 0 1 1.300 1.300 v6.800 a1.300 1.300 0 0 1 -1.300 1.300 h-11.800 a1.300 1.300 0 0 1 -1.300 -1.300z" fill="url(#foldg)" stroke="#5e5e5e" stroke-width=".9"/><path d="M1.800 4.700 h12.400" stroke="#e0e0e0" stroke-opacity=".8" stroke-width="1.100"/></svg>
<span class="t" style="left:76.00px;top:850.50px;font-size:11.3px">Materials</span>
<svg style="left:58px;top:859.5px;width:16px;height:13px" viewBox="0 0 16 13"><path d="M0.800 2.800 a1.300 1.300 0 0 1 1.300 -1.300 h3.800 l1.300 1.400 h6.700 a1.300 1.300 0 0 1 1.300 1.300 v6.800 a1.300 1.300 0 0 1 -1.300 1.300 h-11.800 a1.300 1.300 0 0 1 -1.300 -1.300z" fill="url(#foldg)" stroke="#5e5e5e" stroke-width=".9"/><path d="M1.800 4.700 h12.400" stroke="#e0e0e0" stroke-opacity=".8" stroke-width="1.100"/></svg>
<span class="t" style="left:76.00px;top:866.50px;font-size:11.3px">Models</span>
<svg style="left:58px;top:875.5px;width:16px;height:13px" viewBox="0 0 16 13"><path d="M0.800 2.800 a1.300 1.300 0 0 1 1.300 -1.300 h3.800 l1.300 1.400 h6.700 a1.300 1.300 0 0 1 1.300 1.300 v6.800 a1.300 1.300 0 0 1 -1.300 1.300 h-11.800 a1.300 1.300 0 0 1 -1.300 -1.300z" fill="url(#foldg)" stroke="#5e5e5e" stroke-width=".9"/><path d="M1.800 4.700 h12.400" stroke="#e0e0e0" stroke-opacity=".8" stroke-width="1.100"/></svg>
<span class="t" style="left:76.00px;top:882.50px;font-size:11.3px">Prefabs</span>
<svg style="left:58px;top:891.5px;width:16px;height:13px" viewBox="0 0 16 13"><path d="M0.800 2.800 a1.300 1.300 0 0 1 1.300 -1.300 h3.800 l1.300 1.400 h6.700 a1.300 1.300 0 0 1 1.300 1.300 v6.800 a1.300 1.300 0 0 1 -1.300 1.300 h-11.800 a1.300 1.300 0 0 1 -1.300 -1.300z" fill="url(#foldg)" stroke="#5e5e5e" stroke-width=".9"/><path d="M1.800 4.700 h12.400" stroke="#e0e0e0" stroke-opacity=".8" stroke-width="1.100"/></svg>
<span class="t" style="left:76.00px;top:898.50px;font-size:11.3px">Shaders</span>
<div style="left:0.00px;top:906.00px;width:280.69px;height:16.00px;background:#8f8f8f"></div>
<svg style="left:58px;top:907.5px;width:16px;height:13px" viewBox="0 0 16 13"><path d="M0.800 2.800 a1.300 1.300 0 0 1 1.300 -1.300 h3.800 l1.300 1.400 h6.700 a1.300 1.300 0 0 1 1.300 1.300 v6.800 a1.300 1.300 0 0 1 -1.300 1.300 h-11.800 a1.300 1.300 0 0 1 -1.300 -1.300z" fill="url(#foldg)" stroke="#5e5e5e" stroke-width=".9"/><path d="M1.800 4.700 h12.400" stroke="#e0e0e0" stroke-opacity=".8" stroke-width="1.100"/></svg>
<span class="t" style="left:76.00px;top:914.50px;color:#fff;font-size:11.3px">Textures</span>
<svg style="left:31.5px;top:925.5px;width:8px;height:9px" viewBox="0 0 8 9"><path d="M0.500 0 v9 l7.500 -4.500z" fill="#6a6a6a"/></svg>
<svg style="left:44px;top:923.5px;width:16px;height:13px" viewBox="0 0 16 13"><path d="M0.800 2.800 a1.300 1.300 0 0 1 1.300 -1.300 h3.800 l1.300 1.400 h6.700 a1.300 1.300 0 0 1 1.300 1.300 v6.800 a1.300 1.300 0 0 1 -1.300 1.300 h-11.800 a1.300 1.300 0 0 1 -1.300 -1.300z" fill="url(#foldg)" stroke="#5e5e5e" stroke-width=".9"/><path d="M1.800 4.700 h12.400" stroke="#e0e0e0" stroke-opacity=".8" stroke-width="1.100"/></svg>
<span class="t" style="left:62.00px;top:930.50px;font-size:11.3px">Utility</span>
<div style="left:281.69px;top:665.00px;width:1252.31px;height:18.44px;background:#dcdcdc;border-bottom:1px solid #9a9a9a"></div>
<span class="t" style="left:288.75px;top:675.94px;font-size:11.2px">Assets</span>
<span class="t" style="left:343.69px;top:675.94px;font-size:11.2px">Standard Assets</span>
<span class="t" style="left:454.69px;top:675.94px;font-size:11.2px">Prototyping</span>
<span class="t b" style="left:538.12px;top:675.94px;font-size:11.2px">Textures</span>
<svg style="left:332.8125px;top:671.4375px;width:5px;height:7px" viewBox="0 0 5 7"><path d="M0.500 0.500 v6 l4 -3z" fill="#777"/></svg>
<svg style="left:443.8125px;top:671.4375px;width:5px;height:7px" viewBox="0 0 5 7"><path d="M0.500 0.500 v6 l4 -3z" fill="#777"/></svg>
<svg style="left:527.25px;top:671.4375px;width:5px;height:7px" viewBox="0 0 5 7"><path d="M0.500 0.500 v6 l4 -3z" fill="#777"/></svg>
<div style="left:300.19px;top:694.69px;width:78.38px;height:77.81px;background:#000"></div>
<span class="t" style="left:339.38px;top:784.39px;transform:translate(-50%,-50%);font-size:9.3px">GridEmissive</span>
<div style="left:415.12px;top:716.25px;width:33.38px;height:34.12px;background:#b83a82;box-shadow:0 0 2px rgba(0,0,0,.45)"></div>
<span class="t" style="left:431.81px;top:784.39px;transform:translate(-50%,-50%);font-size:9.3px">SwatchMauveA...</span>
<div style="left:508.22px;top:716.25px;width:33.38px;height:34.12px;background:#222c39;box-shadow:0 0 2px rgba(0,0,0,.45)"></div>
<span class="t" style="left:524.91px;top:784.39px;transform:translate(-50%,-50%);font-size:9.3px">SwatchNavyAl...</span>
<div style="left:601.31px;top:716.25px;width:33.38px;height:34.12px;background:#191d23;box-shadow:0 0 2px rgba(0,0,0,.45)"></div>
<span class="t" style="left:618.00px;top:784.39px;transform:translate(-50%,-50%);font-size:9.3px">SwatchNavyDa...</span>
<div style="left:694.41px;top:716.25px;width:33.38px;height:34.12px;background:#ff7f32;box-shadow:0 0 2px rgba(0,0,0,.45)"></div>
<span class="t" style="left:711.09px;top:784.39px;transform:translate(-50%,-50%);font-size:9.3px">SwatchOrange...</span>
<div style="left:787.50px;top:716.25px;width:33.38px;height:34.12px;background:#ff0066;box-shadow:0 0 2px rgba(0,0,0,.45)"></div>
<span class="t" style="left:804.19px;top:784.39px;transform:translate(-50%,-50%);font-size:9.3px">SwatchPinkDA...</span>
<div style="left:880.59px;top:716.25px;width:33.38px;height:34.12px;background:#00c8cc;box-shadow:0 0 2px rgba(0,0,0,.45)"></div>
<span class="t" style="left:897.28px;top:784.39px;transform:translate(-50%,-50%);font-size:9.3px">SwatchTealAlb...</span>
<div style="left:973.69px;top:716.25px;width:33.38px;height:34.12px;background:#19e0b4;box-shadow:0 0 2px rgba(0,0,0,.45)"></div>
<span class="t" style="left:990.38px;top:784.39px;transform:translate(-50%,-50%);font-size:9.3px">SwatchTurquoi...</span>
<div style="left:1066.78px;top:716.25px;width:33.38px;height:34.12px;background:#ffffff;box-shadow:0 0 2px rgba(0,0,0,.45)"></div>
<span class="t" style="left:1083.47px;top:784.39px;transform:translate(-50%,-50%);font-size:9.3px">SwatchWhiteAl...</span>
<div style="left:1159.88px;top:716.25px;width:33.38px;height:34.12px;background:#ffee00;box-shadow:0 0 2px rgba(0,0,0,.45)"></div>
<span class="t" style="left:1176.56px;top:784.39px;transform:translate(-50%,-50%);font-size:9.3px">SwatchYellowA...</span>
<div style="left:281.69px;top:1002.19px;width:1252.31px;height:15.94px;background:#dedede;border-top:1px solid #9a9a9a"></div>
<div style="left:1462.50px;top:1009.25px;width:54.38px;height:2.00px;background:#7e7e7e;border-radius:1px"></div>
<div style="left:1499.00px;top:1004.75px;width:11.00px;height:11.00px;background:#e8e8e8;border:1px solid #555;border-radius:5.5px"></div>
<svg style="left:2px;top:1024.3125px;width:14px;height:13.5px" viewBox="0 0 18 17"><path d="M9 1 L17.500 16 H0.500z" fill="#ffd21e" stroke="#b08800" stroke-width="1"/><path d="M9 6 v5.500 M9 13 v1.500" stroke="#222" stroke-width="1.800"/></svg>
<span class="t" style="left:20.25px;top:1033.25px;font-size:11.5px;color:#404010">Assets/Standard Assets/Utility/TimedObjectDestructor.cs(24,13): warning CS0618: `UnityEngine.Object.DestroyObject(UnityEngine.Object)' is obsolete: `use Object.Destroy instead.'</span>
</div></div></body></html>
